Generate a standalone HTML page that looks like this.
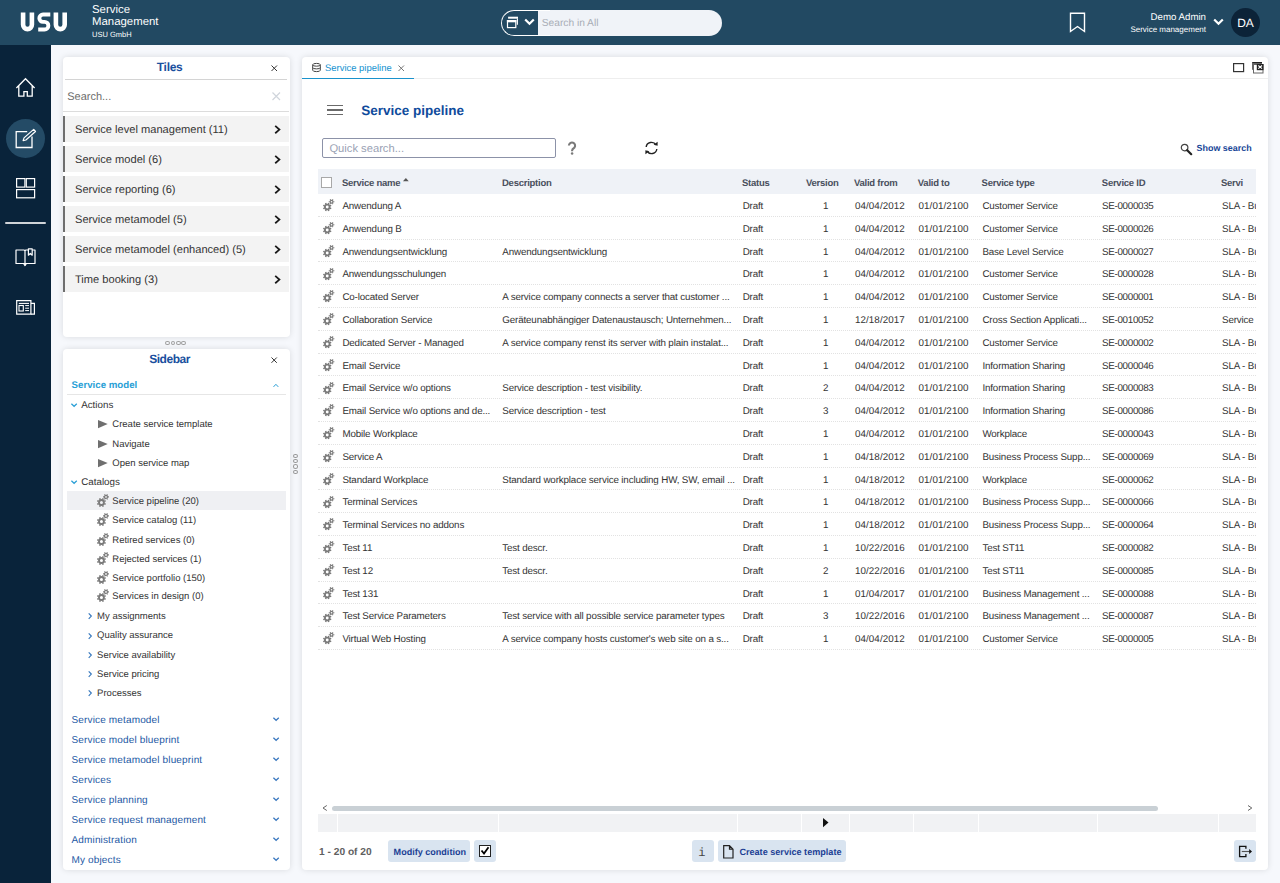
<!DOCTYPE html><html><head><meta charset="utf-8"><style>
html,body{margin:0;padding:0;}
body{text-rendering:geometricPrecision;width:1280px;height:883px;overflow:hidden;position:relative;background:#f6f8fc;font-family:"Liberation Sans",sans-serif;}
.t{position:absolute;white-space:nowrap;}
svg{overflow:visible}
</style></head><body>
<div style="position:absolute;left:0px;top:0px;width:1280px;height:45px;background:#224962;"></div>
<svg style="position:absolute;left:0px;top:0.4px;" width="80" height="45" viewBox="0 0 80 45"><g fill="none" stroke="#fff"><path d="M23.1 12.6 V24.7 A4.4 4.4 0 0 0 31.9 24.7 V12.6" stroke-width="4.6"/><path d="M50.3 14.55 H43 A3.65 3.65 0 0 0 43 21.85 H44.55 A3.825 3.825 0 0 1 44.55 29.5 H38.2" stroke-width="3.9"/><path d="M55.9 12.6 V24.7 A4.4 4.4 0 0 0 64.7 24.7 V12.6" stroke-width="4.6"/></g></svg>
<div class="t" style="left:92.00px;top:5.00px;font-size:11.4px;line-height:11.4px;color:#ffffff;font-weight:400;letter-spacing:0px;">Service</div>
<div class="t" style="left:92.00px;top:17.00px;font-size:11.4px;line-height:11.4px;color:#ffffff;font-weight:400;letter-spacing:0px;">Management</div>
<div class="t" style="left:92.00px;top:31.00px;font-size:7.5px;line-height:7.5px;color:#ffffff;font-weight:400;letter-spacing:0px;">USU GmbH</div>
<div style="position:absolute;left:501px;top:10px;width:221px;height:26px;border-radius:13px;background:#f0f3f8;overflow:hidden;"><div style="position:absolute;left:0;top:0;width:37px;height:26px;background:#224962;"></div><div style="position:absolute;left:0;top:0;width:48px;height:24px;border:1px solid #fff;border-right:none;border-radius:13px 0 0 13px;box-sizing:content-box"></div></div>
<svg style="position:absolute;left:500px;top:10px;" width="40" height="26" viewBox="0 0 40 26"><rect x="8.1" y="6.7" width="9.9" height="2" fill="#fff"/><path d="M17.4 8.5 V14.7" stroke="#fff" stroke-width="1.1" fill="none"/><rect x="7.5" y="10.6" width="8.3" height="7" fill="#224962" stroke="#fff" stroke-width="1.2"/><rect x="6.9" y="10" width="9.4" height="2.3" fill="#fff"/></svg>
<svg style="position:absolute;left:524px;top:18px;" width="11" height="8" viewBox="0 0 11 8"><path d="M1.2 1.5 L5.5 5.8 L9.8 1.5" fill="none" stroke="#fff" stroke-width="2.2"/></svg>
<div class="t" style="left:541.80px;top:19.00px;font-size:10.2px;line-height:10.2px;color:#a8adb6;font-weight:400;letter-spacing:0px;">Search in All</div>
<svg style="position:absolute;left:1069px;top:12px;" width="18" height="22" viewBox="0 0 18 22"><path d="M1.5 1.3 H15.5 V19.5 L8.5 14.5 L1.5 19.5 Z" fill="none" stroke="#fff" stroke-width="1.4" stroke-linejoin="miter"/></svg>
<div class="t" style="right:74.00px;top:13.00px;font-size:9.7px;line-height:9.7px;color:#ffffff;font-weight:400;letter-spacing:0px;">Demo Admin</div>
<div class="t" style="right:74.00px;top:26.00px;font-size:8.0px;line-height:8.0px;color:#ffffff;font-weight:400;letter-spacing:0px;">Service management</div>
<svg style="position:absolute;left:1213px;top:18px;" width="11" height="8" viewBox="0 0 11 8"><path d="M1.2 1.5 L5.5 5.8 L9.8 1.5" fill="none" stroke="#fff" stroke-width="2.2"/></svg>
<div style="position:absolute;left:1231px;top:8px;width:29px;height:29px;border-radius:50%;background:#0c2338;"></div>
<div class="t" style="left:945.50px;width:600px;text-align:center;top:17.00px;font-size:12.0px;line-height:12.0px;color:#ffffff;font-weight:400;letter-spacing:0px;">DA</div>
<div style="position:absolute;left:0px;top:45px;width:51px;height:838px;background:#09233a;"></div>
<svg style="position:absolute;left:15px;top:77px;" width="22" height="21" viewBox="0 0 22 21"><path d="M1.4 11 L10.5 1.7 L19.6 11 M3.8 8.6 V19.1 H8.9 V14.6 H12.3 V19.1 H17.2 V8.6" fill="none" stroke="#fff" stroke-width="1.3"/></svg>
<div style="position:absolute;left:6px;top:119px;width:39px;height:39px;border-radius:50%;background:#244b66;"></div>
<svg style="position:absolute;left:15px;top:129px;" width="22" height="20" viewBox="0 0 22 20"><path d="M12.2 2.7 H1.2 V18.5 H17 V7.5" fill="none" stroke="#fff" stroke-width="1.3"/><path d="M8.1 11.6 L9.04 8.89 L18.7 0.35 L20.5 2.45 L10.9 11.0 Z" fill="none" stroke="#fff" stroke-width="1.2" stroke-linejoin="round"/></svg>
<svg style="position:absolute;left:15px;top:178px;" width="21" height="21" viewBox="0 0 21 21"><rect x="1.6" y="0.6" width="8.3" height="8.5" fill="none" stroke="#fff" stroke-width="1.2"/><rect x="11.3" y="0.6" width="8.3" height="8.5" fill="none" stroke="#fff" stroke-width="1.2"/><rect x="1.6" y="11.6" width="18" height="8.2" fill="none" stroke="#fff" stroke-width="1.2"/></svg>
<div style="position:absolute;left:5px;top:222px;width:41px;height:2px;background:#d0d4d8;border-radius:1px;"></div>
<svg style="position:absolute;left:15px;top:248px;" width="21" height="20" viewBox="0 0 21 20"><g fill="none" stroke="#fff" stroke-width="1.2" stroke-linejoin="round"><path d="M10 15.5 H1 V2 H9 Q10 2 10 3 V15.5"/><path d="M10 3 Q10 2 11 2 H20 V15.5 H10"/><path d="M8.6 15.5 L10 17.6 L11.4 15.5"/><path d="M13.4 0.8 V7.2 L15.3 5.5 L17.2 7.2 V0.8 Z" fill="#09233a"/></g></svg>
<svg style="position:absolute;left:15px;top:299px;" width="21" height="17" viewBox="0 0 21 17"><g fill="none" stroke="#fff"><path d="M1.7 1.7 H15.9 V15.2 H1.7 Z" stroke-width="1.2"/><path d="M15.9 4.4 H19.4 V15.2 H15.9" stroke-width="1.2"/><path d="M3.8 4.4 H14" stroke-width="1.1"/><rect x="4" y="6.5" width="4.3" height="5.5" stroke-width="1.1"/><path d="M10.2 6.6 H14 M10.2 9.2 H14 M10.2 11.6 H14" stroke-width="1"/></g></svg>
<div style="position:absolute;left:63px;top:57px;width:227px;height:280px;background:#fff;border-radius:4px;box-shadow:0 0 6px rgba(0,0,0,0.12);"></div>
<div class="t" style="left:-130.40px;width:600px;text-align:center;top:61.00px;font-size:12.0px;line-height:12.0px;color:#1a4f9e;font-weight:700;letter-spacing:-0.3px;">Tiles</div>
<svg style="position:absolute;left:271px;top:65px;" width="6.5" height="6.5" viewBox="0 0 6.5 6.5"><path d="M0.5 0.5 L6.0 6.0 M6.0 0.5 L0.5 6.0" stroke="#333" stroke-width="1.0" fill="none"/></svg>
<div style="position:absolute;left:65px;top:79px;width:222px;height:1px;background:#d4d4d4;"></div>
<div class="t" style="left:67.20px;top:92.00px;font-size:11.0px;line-height:11.0px;color:#6e6e6e;font-weight:400;letter-spacing:0px;">Search...</div>
<svg style="position:absolute;left:271.5px;top:91.5px;" width="8.5" height="8.5" viewBox="0 0 8.5 8.5"><path d="M0.5 0.5 L8.0 8.0 M8.0 0.5 L0.5 8.0" stroke="#d0d5dc" stroke-width="1.2" fill="none"/></svg>
<div style="position:absolute;left:63px;top:111px;width:226px;height:1px;background:#dcdcdc;"></div>
<div style="position:absolute;left:63px;top:116px;width:226px;height:26px;background:#f3f3f3;"></div>
<div style="position:absolute;left:63px;top:116px;width:2px;height:26px;background:#6e6e6e;"></div>
<div class="t" style="left:75.00px;top:125.00px;font-size:11.1px;line-height:11.1px;color:#333;font-weight:400;letter-spacing:0px;">Service level management (11)</div>
<svg style="position:absolute;left:274px;top:124.5px;" width="7" height="10" viewBox="0 0 7 10"><path d="M1.2 0.9 L5.4 4.6 L1.2 8.3" fill="none" stroke="#1a1a1a" stroke-width="1.8"/></svg>
<div style="position:absolute;left:63px;top:146px;width:226px;height:26px;background:#f3f3f3;"></div>
<div style="position:absolute;left:63px;top:146px;width:2px;height:26px;background:#6e6e6e;"></div>
<div class="t" style="left:75.00px;top:155.00px;font-size:11.1px;line-height:11.1px;color:#333;font-weight:400;letter-spacing:0px;">Service model (6)</div>
<svg style="position:absolute;left:274px;top:154.5px;" width="7" height="10" viewBox="0 0 7 10"><path d="M1.2 0.9 L5.4 4.6 L1.2 8.3" fill="none" stroke="#1a1a1a" stroke-width="1.8"/></svg>
<div style="position:absolute;left:63px;top:176px;width:226px;height:26px;background:#f3f3f3;"></div>
<div style="position:absolute;left:63px;top:176px;width:2px;height:26px;background:#6e6e6e;"></div>
<div class="t" style="left:75.00px;top:185.00px;font-size:11.1px;line-height:11.1px;color:#333;font-weight:400;letter-spacing:0px;">Service reporting (6)</div>
<svg style="position:absolute;left:274px;top:184.5px;" width="7" height="10" viewBox="0 0 7 10"><path d="M1.2 0.9 L5.4 4.6 L1.2 8.3" fill="none" stroke="#1a1a1a" stroke-width="1.8"/></svg>
<div style="position:absolute;left:63px;top:206px;width:226px;height:26px;background:#f3f3f3;"></div>
<div style="position:absolute;left:63px;top:206px;width:2px;height:26px;background:#6e6e6e;"></div>
<div class="t" style="left:75.00px;top:215.00px;font-size:11.1px;line-height:11.1px;color:#333;font-weight:400;letter-spacing:0px;">Service metamodel (5)</div>
<svg style="position:absolute;left:274px;top:214.5px;" width="7" height="10" viewBox="0 0 7 10"><path d="M1.2 0.9 L5.4 4.6 L1.2 8.3" fill="none" stroke="#1a1a1a" stroke-width="1.8"/></svg>
<div style="position:absolute;left:63px;top:236px;width:226px;height:26px;background:#f3f3f3;"></div>
<div style="position:absolute;left:63px;top:236px;width:2px;height:26px;background:#6e6e6e;"></div>
<div class="t" style="left:75.00px;top:245.00px;font-size:11.1px;line-height:11.1px;color:#333;font-weight:400;letter-spacing:0px;">Service metamodel (enhanced) (5)</div>
<svg style="position:absolute;left:274px;top:244.5px;" width="7" height="10" viewBox="0 0 7 10"><path d="M1.2 0.9 L5.4 4.6 L1.2 8.3" fill="none" stroke="#1a1a1a" stroke-width="1.8"/></svg>
<div style="position:absolute;left:63px;top:266px;width:226px;height:26px;background:#f3f3f3;"></div>
<div style="position:absolute;left:63px;top:266px;width:2px;height:26px;background:#6e6e6e;"></div>
<div class="t" style="left:75.00px;top:275.00px;font-size:11.1px;line-height:11.1px;color:#333;font-weight:400;letter-spacing:0px;">Time booking (3)</div>
<svg style="position:absolute;left:274px;top:274.5px;" width="7" height="10" viewBox="0 0 7 10"><path d="M1.2 0.9 L5.4 4.6 L1.2 8.3" fill="none" stroke="#1a1a1a" stroke-width="1.8"/></svg>
<div style="position:absolute;left:165.4px;top:340.9px;width:2.6px;height:2.4px;border:0.8px solid #a0a0a0;border-radius:50%;"></div>
<div style="position:absolute;left:170.7px;top:340.9px;width:2.6px;height:2.4px;border:0.8px solid #a0a0a0;border-radius:50%;"></div>
<div style="position:absolute;left:176.0px;top:340.9px;width:2.6px;height:2.4px;border:0.8px solid #a0a0a0;border-radius:50%;"></div>
<div style="position:absolute;left:181.3px;top:340.9px;width:2.6px;height:2.4px;border:0.8px solid #a0a0a0;border-radius:50%;"></div>
<div style="position:absolute;left:293.2px;top:453.5px;width:3.2px;height:2.6px;border:0.8px solid #999;border-radius:50%;"></div>
<div style="position:absolute;left:293.2px;top:458.9px;width:3.2px;height:2.6px;border:0.8px solid #999;border-radius:50%;"></div>
<div style="position:absolute;left:293.2px;top:464.2px;width:3.2px;height:2.6px;border:0.8px solid #999;border-radius:50%;"></div>
<div style="position:absolute;left:293.2px;top:469.6px;width:3.2px;height:2.6px;border:0.8px solid #999;border-radius:50%;"></div>
<div style="position:absolute;left:63px;top:349px;width:227px;height:521px;background:#fff;border-radius:4px;box-shadow:0 0 6px rgba(0,0,0,0.12);"></div>
<div class="t" style="left:-130.40px;width:600px;text-align:center;top:353.00px;font-size:12.0px;line-height:12.0px;color:#1a4f9e;font-weight:700;letter-spacing:-0.45px;">Sidebar</div>
<svg style="position:absolute;left:270.8px;top:357px;" width="6.3" height="6.3" viewBox="0 0 6.3 6.3"><path d="M0.5 0.5 L5.8 5.8 M5.8 0.5 L0.5 5.8" stroke="#333" stroke-width="1.0" fill="none"/></svg>
<div class="t" style="left:71.60px;top:381.00px;font-size:9.7px;line-height:9.7px;color:#2a9fd6;font-weight:700;letter-spacing:0px;">Service model</div>
<svg style="position:absolute;left:273px;top:382.5px;" width="6" height="5" viewBox="0 0 6 5"><path d="M0.5 3.9 L2.9 1.3 L5.3 3.9" fill="none" stroke="#2a9fd6" stroke-width="1.0"/></svg>
<div style="position:absolute;left:67px;top:394px;width:219px;height:1px;background:#e6e6e6;"></div>
<svg style="position:absolute;left:70.5px;top:402.5px;" width="7" height="4" viewBox="0 0 7 4"><path d="M0.4 0.7 L3.1 3.3 L5.8 0.7" fill="none" stroke="#2a9fd6" stroke-width="1.2"/></svg>
<div class="t" style="left:81.20px;top:401.00px;font-size:9.8px;line-height:9.8px;color:#333;font-weight:400;letter-spacing:0px;">Actions</div>
<svg style="position:absolute;left:98.1px;top:419.9px;" width="10" height="9" viewBox="0 0 10 9"><path d="M0 0 L9.7 4.1 L0 8.2 Z" fill="#6f6f6f"/></svg>
<div class="t" style="left:112.30px;top:420.00px;font-size:9.5px;line-height:9.5px;color:#333;font-weight:400;letter-spacing:0px;">Create service template</div>
<svg style="position:absolute;left:98.1px;top:439.9px;" width="10" height="9" viewBox="0 0 10 9"><path d="M0 0 L9.7 4.1 L0 8.2 Z" fill="#6f6f6f"/></svg>
<div class="t" style="left:112.30px;top:440.00px;font-size:9.5px;line-height:9.5px;color:#333;font-weight:400;letter-spacing:0px;">Navigate</div>
<svg style="position:absolute;left:98.1px;top:458.6px;" width="10" height="9" viewBox="0 0 10 9"><path d="M0 0 L9.7 4.1 L0 8.2 Z" fill="#6f6f6f"/></svg>
<div class="t" style="left:112.30px;top:459.00px;font-size:9.5px;line-height:9.5px;color:#333;font-weight:400;letter-spacing:0px;">Open service map</div>
<svg style="position:absolute;left:70.5px;top:479.7px;" width="7" height="4" viewBox="0 0 7 4"><path d="M0.4 0.7 L3.1 3.3 L5.8 0.7" fill="none" stroke="#2a9fd6" stroke-width="1.2"/></svg>
<div class="t" style="left:81.20px;top:478.00px;font-size:9.8px;line-height:9.8px;color:#333;font-weight:400;letter-spacing:0px;">Catalogs</div>
<div style="position:absolute;left:67px;top:491px;width:219px;height:19px;background:#eff0f3;"></div>
<svg style="position:absolute;left:96.9px;top:492.9px;" width="13" height="14" viewBox="0 0 13 14"><g transform="scale(1.0)"><circle cx="4.45" cy="9.5" r="2.45" fill="none" stroke="#7b7b7b" stroke-width="1.9"/><path d="M7.22 10.65 L8.65 11.24 M5.60 12.27 L6.19 13.70 M3.30 12.27 L2.71 13.70 M1.68 10.65 L0.25 11.24 M1.68 8.35 L0.25 7.76 M3.30 6.73 L2.71 5.30 M5.60 6.73 L6.19 5.30 M7.22 8.35 L8.65 7.76 " stroke="#7b7b7b" stroke-width="1.5" fill="none"/><circle cx="9.0" cy="3.9" r="1.5" fill="none" stroke="#7b7b7b" stroke-width="1.3"/><path d="M10.90 3.90 L11.95 3.90 M9.95 5.55 L10.47 6.45 M8.05 5.55 L7.53 6.45 M7.10 3.90 L6.05 3.90 M8.05 2.25 L7.52 1.35 M9.95 2.25 L10.47 1.35 " stroke="#7b7b7b" stroke-width="1.1" fill="none"/></g></svg>
<div class="t" style="left:112.30px;top:497.00px;font-size:9.5px;line-height:9.5px;color:#333;font-weight:400;letter-spacing:0px;">Service pipeline (20)</div>
<svg style="position:absolute;left:96.9px;top:511.9px;" width="13" height="14" viewBox="0 0 13 14"><g transform="scale(1.0)"><circle cx="4.45" cy="9.5" r="2.45" fill="none" stroke="#7b7b7b" stroke-width="1.9"/><path d="M7.22 10.65 L8.65 11.24 M5.60 12.27 L6.19 13.70 M3.30 12.27 L2.71 13.70 M1.68 10.65 L0.25 11.24 M1.68 8.35 L0.25 7.76 M3.30 6.73 L2.71 5.30 M5.60 6.73 L6.19 5.30 M7.22 8.35 L8.65 7.76 " stroke="#7b7b7b" stroke-width="1.5" fill="none"/><circle cx="9.0" cy="3.9" r="1.5" fill="none" stroke="#7b7b7b" stroke-width="1.3"/><path d="M10.90 3.90 L11.95 3.90 M9.95 5.55 L10.47 6.45 M8.05 5.55 L7.53 6.45 M7.10 3.90 L6.05 3.90 M8.05 2.25 L7.52 1.35 M9.95 2.25 L10.47 1.35 " stroke="#7b7b7b" stroke-width="1.1" fill="none"/></g></svg>
<div class="t" style="left:112.30px;top:516.00px;font-size:9.5px;line-height:9.5px;color:#333;font-weight:400;letter-spacing:0px;">Service catalog (11)</div>
<svg style="position:absolute;left:96.9px;top:531.6px;" width="13" height="14" viewBox="0 0 13 14"><g transform="scale(1.0)"><circle cx="4.45" cy="9.5" r="2.45" fill="none" stroke="#7b7b7b" stroke-width="1.9"/><path d="M7.22 10.65 L8.65 11.24 M5.60 12.27 L6.19 13.70 M3.30 12.27 L2.71 13.70 M1.68 10.65 L0.25 11.24 M1.68 8.35 L0.25 7.76 M3.30 6.73 L2.71 5.30 M5.60 6.73 L6.19 5.30 M7.22 8.35 L8.65 7.76 " stroke="#7b7b7b" stroke-width="1.5" fill="none"/><circle cx="9.0" cy="3.9" r="1.5" fill="none" stroke="#7b7b7b" stroke-width="1.3"/><path d="M10.90 3.90 L11.95 3.90 M9.95 5.55 L10.47 6.45 M8.05 5.55 L7.53 6.45 M7.10 3.90 L6.05 3.90 M8.05 2.25 L7.52 1.35 M9.95 2.25 L10.47 1.35 " stroke="#7b7b7b" stroke-width="1.1" fill="none"/></g></svg>
<div class="t" style="left:112.30px;top:536.00px;font-size:9.5px;line-height:9.5px;color:#333;font-weight:400;letter-spacing:0px;">Retired services (0)</div>
<svg style="position:absolute;left:96.9px;top:550.5px;" width="13" height="14" viewBox="0 0 13 14"><g transform="scale(1.0)"><circle cx="4.45" cy="9.5" r="2.45" fill="none" stroke="#7b7b7b" stroke-width="1.9"/><path d="M7.22 10.65 L8.65 11.24 M5.60 12.27 L6.19 13.70 M3.30 12.27 L2.71 13.70 M1.68 10.65 L0.25 11.24 M1.68 8.35 L0.25 7.76 M3.30 6.73 L2.71 5.30 M5.60 6.73 L6.19 5.30 M7.22 8.35 L8.65 7.76 " stroke="#7b7b7b" stroke-width="1.5" fill="none"/><circle cx="9.0" cy="3.9" r="1.5" fill="none" stroke="#7b7b7b" stroke-width="1.3"/><path d="M10.90 3.90 L11.95 3.90 M9.95 5.55 L10.47 6.45 M8.05 5.55 L7.53 6.45 M7.10 3.90 L6.05 3.90 M8.05 2.25 L7.52 1.35 M9.95 2.25 L10.47 1.35 " stroke="#7b7b7b" stroke-width="1.1" fill="none"/></g></svg>
<div class="t" style="left:112.30px;top:555.00px;font-size:9.5px;line-height:9.5px;color:#333;font-weight:400;letter-spacing:0px;">Rejected services (1)</div>
<svg style="position:absolute;left:96.9px;top:569.7px;" width="13" height="14" viewBox="0 0 13 14"><g transform="scale(1.0)"><circle cx="4.45" cy="9.5" r="2.45" fill="none" stroke="#7b7b7b" stroke-width="1.9"/><path d="M7.22 10.65 L8.65 11.24 M5.60 12.27 L6.19 13.70 M3.30 12.27 L2.71 13.70 M1.68 10.65 L0.25 11.24 M1.68 8.35 L0.25 7.76 M3.30 6.73 L2.71 5.30 M5.60 6.73 L6.19 5.30 M7.22 8.35 L8.65 7.76 " stroke="#7b7b7b" stroke-width="1.5" fill="none"/><circle cx="9.0" cy="3.9" r="1.5" fill="none" stroke="#7b7b7b" stroke-width="1.3"/><path d="M10.90 3.90 L11.95 3.90 M9.95 5.55 L10.47 6.45 M8.05 5.55 L7.53 6.45 M7.10 3.90 L6.05 3.90 M8.05 2.25 L7.52 1.35 M9.95 2.25 L10.47 1.35 " stroke="#7b7b7b" stroke-width="1.1" fill="none"/></g></svg>
<div class="t" style="left:112.30px;top:574.00px;font-size:9.5px;line-height:9.5px;color:#333;font-weight:400;letter-spacing:0px;">Service portfolio (150)</div>
<svg style="position:absolute;left:96.9px;top:588.4px;" width="13" height="14" viewBox="0 0 13 14"><g transform="scale(1.0)"><circle cx="4.45" cy="9.5" r="2.45" fill="none" stroke="#7b7b7b" stroke-width="1.9"/><path d="M7.22 10.65 L8.65 11.24 M5.60 12.27 L6.19 13.70 M3.30 12.27 L2.71 13.70 M1.68 10.65 L0.25 11.24 M1.68 8.35 L0.25 7.76 M3.30 6.73 L2.71 5.30 M5.60 6.73 L6.19 5.30 M7.22 8.35 L8.65 7.76 " stroke="#7b7b7b" stroke-width="1.5" fill="none"/><circle cx="9.0" cy="3.9" r="1.5" fill="none" stroke="#7b7b7b" stroke-width="1.3"/><path d="M10.90 3.90 L11.95 3.90 M9.95 5.55 L10.47 6.45 M8.05 5.55 L7.53 6.45 M7.10 3.90 L6.05 3.90 M8.05 2.25 L7.52 1.35 M9.95 2.25 L10.47 1.35 " stroke="#7b7b7b" stroke-width="1.1" fill="none"/></g></svg>
<div class="t" style="left:112.30px;top:592.00px;font-size:9.5px;line-height:9.5px;color:#333;font-weight:400;letter-spacing:0px;">Services in design (0)</div>
<svg style="position:absolute;left:87.5px;top:612.6px;" width="4" height="6" viewBox="0 0 4 6"><path d="M0.7 0.4 L3.3 3.1 L0.7 5.8" fill="none" stroke="#3a7bbf" stroke-width="1.2"/></svg>
<div class="t" style="left:97.10px;top:612.00px;font-size:9.5px;line-height:9.5px;color:#333;font-weight:400;letter-spacing:0px;">My assignments</div>
<svg style="position:absolute;left:87.5px;top:632.5px;" width="4" height="6" viewBox="0 0 4 6"><path d="M0.7 0.4 L3.3 3.1 L0.7 5.8" fill="none" stroke="#3a7bbf" stroke-width="1.2"/></svg>
<div class="t" style="left:97.10px;top:631.00px;font-size:9.5px;line-height:9.5px;color:#333;font-weight:400;letter-spacing:0px;">Quality assurance</div>
<svg style="position:absolute;left:87.5px;top:651.7px;" width="4" height="6" viewBox="0 0 4 6"><path d="M0.7 0.4 L3.3 3.1 L0.7 5.8" fill="none" stroke="#3a7bbf" stroke-width="1.2"/></svg>
<div class="t" style="left:97.10px;top:651.00px;font-size:9.5px;line-height:9.5px;color:#333;font-weight:400;letter-spacing:0px;">Service availability</div>
<svg style="position:absolute;left:87.5px;top:670.9px;" width="4" height="6" viewBox="0 0 4 6"><path d="M0.7 0.4 L3.3 3.1 L0.7 5.8" fill="none" stroke="#3a7bbf" stroke-width="1.2"/></svg>
<div class="t" style="left:97.10px;top:670.00px;font-size:9.5px;line-height:9.5px;color:#333;font-weight:400;letter-spacing:0px;">Service pricing</div>
<svg style="position:absolute;left:87.5px;top:689.5px;" width="4" height="6" viewBox="0 0 4 6"><path d="M0.7 0.4 L3.3 3.1 L0.7 5.8" fill="none" stroke="#3a7bbf" stroke-width="1.2"/></svg>
<div class="t" style="left:97.10px;top:689.00px;font-size:9.5px;line-height:9.5px;color:#333;font-weight:400;letter-spacing:0px;">Processes</div>
<div class="t" style="left:71.50px;top:716.00px;font-size:10.0px;line-height:10.0px;color:#2358a4;font-weight:400;letter-spacing:0.15px;">Service metamodel</div>
<svg style="position:absolute;left:272.8px;top:717.3px;" width="7" height="4" viewBox="0 0 7 4"><path d="M0.4 0.7 L3.1 3.3 L5.8 0.7" fill="none" stroke="#3a78bf" stroke-width="1.2"/></svg>
<div class="t" style="left:71.50px;top:736.00px;font-size:10.0px;line-height:10.0px;color:#2358a4;font-weight:400;letter-spacing:0.15px;">Service model blueprint</div>
<svg style="position:absolute;left:272.8px;top:737.1px;" width="7" height="4" viewBox="0 0 7 4"><path d="M0.4 0.7 L3.1 3.3 L5.8 0.7" fill="none" stroke="#3a78bf" stroke-width="1.2"/></svg>
<div class="t" style="left:71.50px;top:756.00px;font-size:10.0px;line-height:10.0px;color:#2358a4;font-weight:400;letter-spacing:0.15px;">Service metamodel blueprint</div>
<svg style="position:absolute;left:272.8px;top:757.3px;" width="7" height="4" viewBox="0 0 7 4"><path d="M0.4 0.7 L3.1 3.3 L5.8 0.7" fill="none" stroke="#3a78bf" stroke-width="1.2"/></svg>
<div class="t" style="left:71.50px;top:776.00px;font-size:10.0px;line-height:10.0px;color:#2358a4;font-weight:400;letter-spacing:0.15px;">Services</div>
<svg style="position:absolute;left:272.8px;top:777.2px;" width="7" height="4" viewBox="0 0 7 4"><path d="M0.4 0.7 L3.1 3.3 L5.8 0.7" fill="none" stroke="#3a78bf" stroke-width="1.2"/></svg>
<div class="t" style="left:71.50px;top:796.00px;font-size:10.0px;line-height:10.0px;color:#2358a4;font-weight:400;letter-spacing:0.15px;">Service planning</div>
<svg style="position:absolute;left:272.8px;top:797.1px;" width="7" height="4" viewBox="0 0 7 4"><path d="M0.4 0.7 L3.1 3.3 L5.8 0.7" fill="none" stroke="#3a78bf" stroke-width="1.2"/></svg>
<div class="t" style="left:71.50px;top:816.00px;font-size:10.0px;line-height:10.0px;color:#2358a4;font-weight:400;letter-spacing:0.15px;">Service request management</div>
<svg style="position:absolute;left:272.8px;top:817.3px;" width="7" height="4" viewBox="0 0 7 4"><path d="M0.4 0.7 L3.1 3.3 L5.8 0.7" fill="none" stroke="#3a78bf" stroke-width="1.2"/></svg>
<div class="t" style="left:71.50px;top:836.00px;font-size:10.0px;line-height:10.0px;color:#2358a4;font-weight:400;letter-spacing:0.15px;">Administration</div>
<svg style="position:absolute;left:272.8px;top:837.1px;" width="7" height="4" viewBox="0 0 7 4"><path d="M0.4 0.7 L3.1 3.3 L5.8 0.7" fill="none" stroke="#3a78bf" stroke-width="1.2"/></svg>
<div class="t" style="left:71.50px;top:856.00px;font-size:10.0px;line-height:10.0px;color:#2358a4;font-weight:400;letter-spacing:0.15px;">My objects</div>
<svg style="position:absolute;left:272.8px;top:857.3px;" width="7" height="4" viewBox="0 0 7 4"><path d="M0.4 0.7 L3.1 3.3 L5.8 0.7" fill="none" stroke="#3a78bf" stroke-width="1.2"/></svg>
<div style="position:absolute;left:302px;top:57px;width:966px;height:813px;background:#fff;border-radius:4px;box-shadow:0 0 6px rgba(0,0,0,0.12);"></div>
<svg style="position:absolute;left:312px;top:63px;" width="9" height="9" viewBox="0 0 9 9"><ellipse cx="4.5" cy="1.8" rx="3.8" ry="1.4" fill="none" stroke="#444" stroke-width="1"/><path d="M0.7 1.8 V7.2 A3.8 1.4 0 0 0 8.3 7.2 V1.8 M0.7 4.5 A3.8 1.4 0 0 0 8.3 4.5" fill="none" stroke="#444" stroke-width="1"/></svg>
<div class="t" style="left:325.00px;top:64.00px;font-size:9.45px;line-height:9.45px;color:#1592d0;font-weight:400;letter-spacing:0px;">Service pipeline</div>
<svg style="position:absolute;left:397.5px;top:64.5px;" width="6.5" height="6.5" viewBox="0 0 6.5 6.5"><path d="M0.5 0.5 L6.0 6.0 M6.0 0.5 L0.5 6.0" stroke="#666" stroke-width="0.9" fill="none"/></svg>
<div style="position:absolute;left:414px;top:78px;width:854px;height:1px;background:#eeeeee;"></div>
<div style="position:absolute;left:302px;top:77.6px;width:112px;height:1.6000000000000085px;background:#1a92cc;"></div>
<svg style="position:absolute;left:1233px;top:63px;" width="11" height="9" viewBox="0 0 11 9"><rect x="0.6" y="0.6" width="10" height="8" fill="none" stroke="#333" stroke-width="1.2"/></svg>
<svg style="position:absolute;left:1252px;top:62px;" width="12" height="12" viewBox="0 0 12 12"><rect x="0" y="0" width="10" height="1.7" fill="#222"/><path d="M0.5 0.5 V7.8" stroke="#666" stroke-width="1" fill="none"/><circle cx="2.9" cy="4.3" r="0.9" fill="#222"/><rect x="1.5" y="2.5" width="9.5" height="8.5" fill="#fff" stroke="#666" stroke-width="1"/><rect x="4.8" y="2" width="6.7" height="6.2" fill="#222"/><path d="M6.3 3.5 L10 6.7 M10 3.5 L6.3 6.7" stroke="#fff" stroke-width="1.1"/></svg>
<div style="position:absolute;left:327px;top:104.5px;width:16px;height:1.7999999999999972px;background:#6a6a6a;"></div>
<div style="position:absolute;left:327px;top:109.1px;width:16px;height:1.7999999999999972px;background:#6a6a6a;"></div>
<div style="position:absolute;left:327px;top:113.6px;width:16px;height:1.7999999999999972px;background:#6a6a6a;"></div>
<div class="t" style="left:361.30px;top:104.00px;font-size:13.5px;line-height:13.5px;color:#0f4b9c;font-weight:700;letter-spacing:0px;">Service pipeline</div>
<div style="position:absolute;left:322px;top:138px;width:232px;height:18px;border:1px solid #8c92a8;border-radius:2px;background:#fff"></div>
<div class="t" style="left:329.40px;top:144.00px;font-size:11.2px;line-height:11.2px;color:#9aa2b4;font-weight:400;letter-spacing:0px;">Quick search...</div>
<svg style="position:absolute;left:566px;top:141px;" width="12" height="14" viewBox="0 0 12 14"><path d="M2.9 4.6 A3.1 3.1 0 1 1 8.4 6.6 Q6.1 8.1 6.1 9.6 V10.3" fill="none" stroke="#7a7a7a" stroke-width="2.1"/><circle cx="6.1" cy="12.4" r="1.25" fill="#7a7a7a"/></svg>
<svg style="position:absolute;left:644px;top:141px;" width="15" height="14" viewBox="0 0 15 14"><path d="M2.2 6 A5.3 5 0 0 1 12 3.8" fill="none" stroke="#222" stroke-width="1.4"/><path d="M12.8 8 A5.3 5 0 0 1 3 10.2" fill="none" stroke="#222" stroke-width="1.4"/><path d="M9.6 3.8 L13.6 4.8 L13.6 0.8 Z" fill="#222"/><path d="M5.4 10.2 L1.4 9.2 L1.4 13.2 Z" fill="#222"/></svg>
<svg style="position:absolute;left:1180px;top:142.5px;" width="13" height="13" viewBox="0 0 13 13"><circle cx="4.6" cy="4.6" r="3.3" fill="none" stroke="#444" stroke-width="1.2"/><path d="M7.2 7.2 L11.2 11.2" stroke="#222" stroke-width="2.2" stroke-linecap="round"/></svg>
<div class="t" style="left:1196.50px;top:144.00px;font-size:8.95px;line-height:8.95px;color:#174597;font-weight:700;letter-spacing:0px;">Show search</div>
<div style="position:absolute;left:318px;top:169px;width:938px;height:25px;background:#eff2f7;"></div>
<div style="position:absolute;left:321px;top:177px;width:9px;height:9px;border:1px solid #a8a8a8;background:#fff"></div>
<div class="t" style="left:342.00px;top:179.00px;font-size:9.5px;line-height:9.5px;color:#4a505e;font-weight:700;letter-spacing:-0.25px;">Service name</div>
<svg style="position:absolute;left:403px;top:177.8px;" width="6" height="4" viewBox="0 0 6 4"><path d="M0 3.2 L2.85 0 L5.7 3.2 Z" fill="#555"/></svg>
<div class="t" style="left:502.00px;top:179.00px;font-size:9.5px;line-height:9.5px;color:#4a505e;font-weight:700;letter-spacing:-0.25px;">Description</div>
<div class="t" style="left:742.00px;top:179.00px;font-size:9.5px;line-height:9.5px;color:#4a505e;font-weight:700;letter-spacing:-0.25px;">Status</div>
<div class="t" style="left:806.00px;top:179.00px;font-size:9.5px;line-height:9.5px;color:#4a505e;font-weight:700;letter-spacing:-0.25px;">Version</div>
<div class="t" style="left:854.00px;top:179.00px;font-size:9.5px;line-height:9.5px;color:#4a505e;font-weight:700;letter-spacing:-0.25px;">Valid from</div>
<div class="t" style="left:917.80px;top:179.00px;font-size:9.5px;line-height:9.5px;color:#4a505e;font-weight:700;letter-spacing:-0.25px;">Valid to</div>
<div class="t" style="left:981.60px;top:179.00px;font-size:9.5px;line-height:9.5px;color:#4a505e;font-weight:700;letter-spacing:-0.25px;">Service type</div>
<div class="t" style="left:1101.80px;top:179.00px;font-size:9.5px;line-height:9.5px;color:#4a505e;font-weight:700;letter-spacing:-0.25px;">Service ID</div>
<div class="t" style="left:1221.00px;top:179.00px;font-size:9.5px;line-height:9.5px;color:#4a505e;font-weight:700;letter-spacing:-0.25px;">Servi</div>
<div style="position:absolute;left:318px;top:215.80px;width:938px;height:0;border-top:1px dotted #e2e2e2"></div>
<svg style="position:absolute;left:322.97px;top:198.27px;" width="13" height="14" viewBox="0 0 13 14"><g transform="scale(0.95)"><circle cx="4.45" cy="9.5" r="2.45" fill="none" stroke="#7b7b7b" stroke-width="1.9"/><path d="M7.22 10.65 L8.65 11.24 M5.60 12.27 L6.19 13.70 M3.30 12.27 L2.71 13.70 M1.68 10.65 L0.25 11.24 M1.68 8.35 L0.25 7.76 M3.30 6.73 L2.71 5.30 M5.60 6.73 L6.19 5.30 M7.22 8.35 L8.65 7.76 " stroke="#7b7b7b" stroke-width="1.5" fill="none"/><circle cx="9.0" cy="3.9" r="1.5" fill="none" stroke="#7b7b7b" stroke-width="1.3"/><path d="M10.90 3.90 L11.95 3.90 M9.95 5.55 L10.47 6.45 M8.05 5.55 L7.53 6.45 M7.10 3.90 L6.05 3.90 M8.05 2.25 L7.52 1.35 M9.95 2.25 L10.47 1.35 " stroke="#7b7b7b" stroke-width="1.1" fill="none"/></g></svg>
<div class="t" style="left:342.40px;top:202.00px;font-size:9.8px;line-height:9.8px;color:#333;font-weight:400;letter-spacing:-0.15px;">Anwendung A</div>
<div class="t" style="left:742.70px;top:202.00px;font-size:9.8px;line-height:9.8px;color:#333;font-weight:400;letter-spacing:-0.15px;">Draft</div>
<div class="t" style="left:525.80px;width:600px;text-align:center;top:202.00px;font-size:9.8px;line-height:9.8px;color:#333;font-weight:400;letter-spacing:0px;">1</div>
<div class="t" style="left:854.90px;top:202.00px;font-size:9.8px;line-height:9.8px;color:#333;font-weight:400;letter-spacing:0.1px;">04/04/2012</div>
<div class="t" style="left:918.50px;top:202.00px;font-size:9.8px;line-height:9.8px;color:#333;font-weight:400;letter-spacing:0.1px;">01/01/2100</div>
<div class="t" style="left:982.40px;top:202.00px;font-size:9.8px;line-height:9.8px;color:#333;font-weight:400;letter-spacing:-0.15px;">Customer Service</div>
<div class="t" style="left:1102.00px;top:202.00px;font-size:9.8px;line-height:9.8px;color:#333;font-weight:400;letter-spacing:-0.3px;">SE-0000035</div>
<div class="t" style="left:1222.00px;top:202.00px;font-size:9.8px;line-height:9.8px;color:#333;font-weight:400;letter-spacing:-0.15px;width:34px;overflow:hidden;">SLA - Bu</div>
<div style="position:absolute;left:318px;top:238.60px;width:938px;height:0;border-top:1px dotted #e2e2e2"></div>
<svg style="position:absolute;left:322.97px;top:221.07000000000002px;" width="13" height="14" viewBox="0 0 13 14"><g transform="scale(0.95)"><circle cx="4.45" cy="9.5" r="2.45" fill="none" stroke="#7b7b7b" stroke-width="1.9"/><path d="M7.22 10.65 L8.65 11.24 M5.60 12.27 L6.19 13.70 M3.30 12.27 L2.71 13.70 M1.68 10.65 L0.25 11.24 M1.68 8.35 L0.25 7.76 M3.30 6.73 L2.71 5.30 M5.60 6.73 L6.19 5.30 M7.22 8.35 L8.65 7.76 " stroke="#7b7b7b" stroke-width="1.5" fill="none"/><circle cx="9.0" cy="3.9" r="1.5" fill="none" stroke="#7b7b7b" stroke-width="1.3"/><path d="M10.90 3.90 L11.95 3.90 M9.95 5.55 L10.47 6.45 M8.05 5.55 L7.53 6.45 M7.10 3.90 L6.05 3.90 M8.05 2.25 L7.52 1.35 M9.95 2.25 L10.47 1.35 " stroke="#7b7b7b" stroke-width="1.1" fill="none"/></g></svg>
<div class="t" style="left:342.40px;top:225.00px;font-size:9.8px;line-height:9.8px;color:#333;font-weight:400;letter-spacing:-0.15px;">Anwendung B</div>
<div class="t" style="left:742.70px;top:225.00px;font-size:9.8px;line-height:9.8px;color:#333;font-weight:400;letter-spacing:-0.15px;">Draft</div>
<div class="t" style="left:525.80px;width:600px;text-align:center;top:225.00px;font-size:9.8px;line-height:9.8px;color:#333;font-weight:400;letter-spacing:0px;">1</div>
<div class="t" style="left:854.90px;top:225.00px;font-size:9.8px;line-height:9.8px;color:#333;font-weight:400;letter-spacing:0.1px;">04/04/2012</div>
<div class="t" style="left:918.50px;top:225.00px;font-size:9.8px;line-height:9.8px;color:#333;font-weight:400;letter-spacing:0.1px;">01/01/2100</div>
<div class="t" style="left:982.40px;top:225.00px;font-size:9.8px;line-height:9.8px;color:#333;font-weight:400;letter-spacing:-0.15px;">Customer Service</div>
<div class="t" style="left:1102.00px;top:225.00px;font-size:9.8px;line-height:9.8px;color:#333;font-weight:400;letter-spacing:-0.3px;">SE-0000026</div>
<div class="t" style="left:1222.00px;top:225.00px;font-size:9.8px;line-height:9.8px;color:#333;font-weight:400;letter-spacing:-0.15px;width:34px;overflow:hidden;">SLA - Bu</div>
<div style="position:absolute;left:318px;top:261.40px;width:938px;height:0;border-top:1px dotted #e2e2e2"></div>
<svg style="position:absolute;left:322.97px;top:243.87px;" width="13" height="14" viewBox="0 0 13 14"><g transform="scale(0.95)"><circle cx="4.45" cy="9.5" r="2.45" fill="none" stroke="#7b7b7b" stroke-width="1.9"/><path d="M7.22 10.65 L8.65 11.24 M5.60 12.27 L6.19 13.70 M3.30 12.27 L2.71 13.70 M1.68 10.65 L0.25 11.24 M1.68 8.35 L0.25 7.76 M3.30 6.73 L2.71 5.30 M5.60 6.73 L6.19 5.30 M7.22 8.35 L8.65 7.76 " stroke="#7b7b7b" stroke-width="1.5" fill="none"/><circle cx="9.0" cy="3.9" r="1.5" fill="none" stroke="#7b7b7b" stroke-width="1.3"/><path d="M10.90 3.90 L11.95 3.90 M9.95 5.55 L10.47 6.45 M8.05 5.55 L7.53 6.45 M7.10 3.90 L6.05 3.90 M8.05 2.25 L7.52 1.35 M9.95 2.25 L10.47 1.35 " stroke="#7b7b7b" stroke-width="1.1" fill="none"/></g></svg>
<div class="t" style="left:342.40px;top:248.00px;font-size:9.8px;line-height:9.8px;color:#333;font-weight:400;letter-spacing:-0.15px;">Anwendungsentwicklung</div>
<div class="t" style="left:502.30px;top:248.00px;font-size:9.8px;line-height:9.8px;color:#333;font-weight:400;letter-spacing:-0.15px;">Anwendungsentwicklung</div>
<div class="t" style="left:742.70px;top:248.00px;font-size:9.8px;line-height:9.8px;color:#333;font-weight:400;letter-spacing:-0.15px;">Draft</div>
<div class="t" style="left:525.80px;width:600px;text-align:center;top:248.00px;font-size:9.8px;line-height:9.8px;color:#333;font-weight:400;letter-spacing:0px;">1</div>
<div class="t" style="left:854.90px;top:248.00px;font-size:9.8px;line-height:9.8px;color:#333;font-weight:400;letter-spacing:0.1px;">04/04/2012</div>
<div class="t" style="left:918.50px;top:248.00px;font-size:9.8px;line-height:9.8px;color:#333;font-weight:400;letter-spacing:0.1px;">01/01/2100</div>
<div class="t" style="left:982.40px;top:248.00px;font-size:9.8px;line-height:9.8px;color:#333;font-weight:400;letter-spacing:-0.15px;">Base Level Service</div>
<div class="t" style="left:1102.00px;top:248.00px;font-size:9.8px;line-height:9.8px;color:#333;font-weight:400;letter-spacing:-0.3px;">SE-0000027</div>
<div class="t" style="left:1222.00px;top:248.00px;font-size:9.8px;line-height:9.8px;color:#333;font-weight:400;letter-spacing:-0.15px;width:34px;overflow:hidden;">SLA - Bu</div>
<div style="position:absolute;left:318px;top:284.20px;width:938px;height:0;border-top:1px dotted #e2e2e2"></div>
<svg style="position:absolute;left:322.97px;top:266.66999999999996px;" width="13" height="14" viewBox="0 0 13 14"><g transform="scale(0.95)"><circle cx="4.45" cy="9.5" r="2.45" fill="none" stroke="#7b7b7b" stroke-width="1.9"/><path d="M7.22 10.65 L8.65 11.24 M5.60 12.27 L6.19 13.70 M3.30 12.27 L2.71 13.70 M1.68 10.65 L0.25 11.24 M1.68 8.35 L0.25 7.76 M3.30 6.73 L2.71 5.30 M5.60 6.73 L6.19 5.30 M7.22 8.35 L8.65 7.76 " stroke="#7b7b7b" stroke-width="1.5" fill="none"/><circle cx="9.0" cy="3.9" r="1.5" fill="none" stroke="#7b7b7b" stroke-width="1.3"/><path d="M10.90 3.90 L11.95 3.90 M9.95 5.55 L10.47 6.45 M8.05 5.55 L7.53 6.45 M7.10 3.90 L6.05 3.90 M8.05 2.25 L7.52 1.35 M9.95 2.25 L10.47 1.35 " stroke="#7b7b7b" stroke-width="1.1" fill="none"/></g></svg>
<div class="t" style="left:342.40px;top:270.00px;font-size:9.8px;line-height:9.8px;color:#333;font-weight:400;letter-spacing:-0.15px;">Anwendungsschulungen</div>
<div class="t" style="left:742.70px;top:270.00px;font-size:9.8px;line-height:9.8px;color:#333;font-weight:400;letter-spacing:-0.15px;">Draft</div>
<div class="t" style="left:525.80px;width:600px;text-align:center;top:270.00px;font-size:9.8px;line-height:9.8px;color:#333;font-weight:400;letter-spacing:0px;">1</div>
<div class="t" style="left:854.90px;top:270.00px;font-size:9.8px;line-height:9.8px;color:#333;font-weight:400;letter-spacing:0.1px;">04/04/2012</div>
<div class="t" style="left:918.50px;top:270.00px;font-size:9.8px;line-height:9.8px;color:#333;font-weight:400;letter-spacing:0.1px;">01/01/2100</div>
<div class="t" style="left:982.40px;top:270.00px;font-size:9.8px;line-height:9.8px;color:#333;font-weight:400;letter-spacing:-0.15px;">Customer Service</div>
<div class="t" style="left:1102.00px;top:270.00px;font-size:9.8px;line-height:9.8px;color:#333;font-weight:400;letter-spacing:-0.3px;">SE-0000028</div>
<div class="t" style="left:1222.00px;top:270.00px;font-size:9.8px;line-height:9.8px;color:#333;font-weight:400;letter-spacing:-0.15px;width:34px;overflow:hidden;">SLA - Bu</div>
<div style="position:absolute;left:318px;top:307.00px;width:938px;height:0;border-top:1px dotted #e2e2e2"></div>
<svg style="position:absolute;left:322.97px;top:289.46999999999997px;" width="13" height="14" viewBox="0 0 13 14"><g transform="scale(0.95)"><circle cx="4.45" cy="9.5" r="2.45" fill="none" stroke="#7b7b7b" stroke-width="1.9"/><path d="M7.22 10.65 L8.65 11.24 M5.60 12.27 L6.19 13.70 M3.30 12.27 L2.71 13.70 M1.68 10.65 L0.25 11.24 M1.68 8.35 L0.25 7.76 M3.30 6.73 L2.71 5.30 M5.60 6.73 L6.19 5.30 M7.22 8.35 L8.65 7.76 " stroke="#7b7b7b" stroke-width="1.5" fill="none"/><circle cx="9.0" cy="3.9" r="1.5" fill="none" stroke="#7b7b7b" stroke-width="1.3"/><path d="M10.90 3.90 L11.95 3.90 M9.95 5.55 L10.47 6.45 M8.05 5.55 L7.53 6.45 M7.10 3.90 L6.05 3.90 M8.05 2.25 L7.52 1.35 M9.95 2.25 L10.47 1.35 " stroke="#7b7b7b" stroke-width="1.1" fill="none"/></g></svg>
<div class="t" style="left:342.40px;top:293.00px;font-size:9.8px;line-height:9.8px;color:#333;font-weight:400;letter-spacing:-0.15px;">Co-located Server</div>
<div class="t" style="left:502.30px;top:293.00px;font-size:9.8px;line-height:9.8px;color:#333;font-weight:400;letter-spacing:-0.15px;">A service company connects a server that customer ...</div>
<div class="t" style="left:742.70px;top:293.00px;font-size:9.8px;line-height:9.8px;color:#333;font-weight:400;letter-spacing:-0.15px;">Draft</div>
<div class="t" style="left:525.80px;width:600px;text-align:center;top:293.00px;font-size:9.8px;line-height:9.8px;color:#333;font-weight:400;letter-spacing:0px;">1</div>
<div class="t" style="left:854.90px;top:293.00px;font-size:9.8px;line-height:9.8px;color:#333;font-weight:400;letter-spacing:0.1px;">04/04/2012</div>
<div class="t" style="left:918.50px;top:293.00px;font-size:9.8px;line-height:9.8px;color:#333;font-weight:400;letter-spacing:0.1px;">01/01/2100</div>
<div class="t" style="left:982.40px;top:293.00px;font-size:9.8px;line-height:9.8px;color:#333;font-weight:400;letter-spacing:-0.15px;">Customer Service</div>
<div class="t" style="left:1102.00px;top:293.00px;font-size:9.8px;line-height:9.8px;color:#333;font-weight:400;letter-spacing:-0.3px;">SE-0000001</div>
<div class="t" style="left:1222.00px;top:293.00px;font-size:9.8px;line-height:9.8px;color:#333;font-weight:400;letter-spacing:-0.15px;width:34px;overflow:hidden;">SLA - Bu</div>
<div style="position:absolute;left:318px;top:329.80px;width:938px;height:0;border-top:1px dotted #e2e2e2"></div>
<svg style="position:absolute;left:322.97px;top:312.27px;" width="13" height="14" viewBox="0 0 13 14"><g transform="scale(0.95)"><circle cx="4.45" cy="9.5" r="2.45" fill="none" stroke="#7b7b7b" stroke-width="1.9"/><path d="M7.22 10.65 L8.65 11.24 M5.60 12.27 L6.19 13.70 M3.30 12.27 L2.71 13.70 M1.68 10.65 L0.25 11.24 M1.68 8.35 L0.25 7.76 M3.30 6.73 L2.71 5.30 M5.60 6.73 L6.19 5.30 M7.22 8.35 L8.65 7.76 " stroke="#7b7b7b" stroke-width="1.5" fill="none"/><circle cx="9.0" cy="3.9" r="1.5" fill="none" stroke="#7b7b7b" stroke-width="1.3"/><path d="M10.90 3.90 L11.95 3.90 M9.95 5.55 L10.47 6.45 M8.05 5.55 L7.53 6.45 M7.10 3.90 L6.05 3.90 M8.05 2.25 L7.52 1.35 M9.95 2.25 L10.47 1.35 " stroke="#7b7b7b" stroke-width="1.1" fill="none"/></g></svg>
<div class="t" style="left:342.40px;top:316.00px;font-size:9.8px;line-height:9.8px;color:#333;font-weight:400;letter-spacing:-0.15px;">Collaboration Service</div>
<div class="t" style="left:502.30px;top:316.00px;font-size:9.8px;line-height:9.8px;color:#333;font-weight:400;letter-spacing:-0.15px;">Geräteunabhängiger Datenaustausch; Unternehmen...</div>
<div class="t" style="left:742.70px;top:316.00px;font-size:9.8px;line-height:9.8px;color:#333;font-weight:400;letter-spacing:-0.15px;">Draft</div>
<div class="t" style="left:525.80px;width:600px;text-align:center;top:316.00px;font-size:9.8px;line-height:9.8px;color:#333;font-weight:400;letter-spacing:0px;">1</div>
<div class="t" style="left:854.90px;top:316.00px;font-size:9.8px;line-height:9.8px;color:#333;font-weight:400;letter-spacing:0.1px;">12/18/2017</div>
<div class="t" style="left:918.50px;top:316.00px;font-size:9.8px;line-height:9.8px;color:#333;font-weight:400;letter-spacing:0.1px;">01/01/2100</div>
<div class="t" style="left:982.40px;top:316.00px;font-size:9.8px;line-height:9.8px;color:#333;font-weight:400;letter-spacing:-0.15px;">Cross Section Applicati...</div>
<div class="t" style="left:1102.00px;top:316.00px;font-size:9.8px;line-height:9.8px;color:#333;font-weight:400;letter-spacing:-0.3px;">SE-0010052</div>
<div class="t" style="left:1222.00px;top:316.00px;font-size:9.8px;line-height:9.8px;color:#333;font-weight:400;letter-spacing:-0.15px;width:34px;overflow:hidden;">Service</div>
<div style="position:absolute;left:318px;top:352.60px;width:938px;height:0;border-top:1px dotted #e2e2e2"></div>
<svg style="position:absolute;left:322.97px;top:335.07px;" width="13" height="14" viewBox="0 0 13 14"><g transform="scale(0.95)"><circle cx="4.45" cy="9.5" r="2.45" fill="none" stroke="#7b7b7b" stroke-width="1.9"/><path d="M7.22 10.65 L8.65 11.24 M5.60 12.27 L6.19 13.70 M3.30 12.27 L2.71 13.70 M1.68 10.65 L0.25 11.24 M1.68 8.35 L0.25 7.76 M3.30 6.73 L2.71 5.30 M5.60 6.73 L6.19 5.30 M7.22 8.35 L8.65 7.76 " stroke="#7b7b7b" stroke-width="1.5" fill="none"/><circle cx="9.0" cy="3.9" r="1.5" fill="none" stroke="#7b7b7b" stroke-width="1.3"/><path d="M10.90 3.90 L11.95 3.90 M9.95 5.55 L10.47 6.45 M8.05 5.55 L7.53 6.45 M7.10 3.90 L6.05 3.90 M8.05 2.25 L7.52 1.35 M9.95 2.25 L10.47 1.35 " stroke="#7b7b7b" stroke-width="1.1" fill="none"/></g></svg>
<div class="t" style="left:342.40px;top:339.00px;font-size:9.8px;line-height:9.8px;color:#333;font-weight:400;letter-spacing:-0.15px;">Dedicated Server - Managed</div>
<div class="t" style="left:502.30px;top:339.00px;font-size:9.8px;line-height:9.8px;color:#333;font-weight:400;letter-spacing:-0.15px;">A service company renst its server with plain instalat...</div>
<div class="t" style="left:742.70px;top:339.00px;font-size:9.8px;line-height:9.8px;color:#333;font-weight:400;letter-spacing:-0.15px;">Draft</div>
<div class="t" style="left:525.80px;width:600px;text-align:center;top:339.00px;font-size:9.8px;line-height:9.8px;color:#333;font-weight:400;letter-spacing:0px;">1</div>
<div class="t" style="left:854.90px;top:339.00px;font-size:9.8px;line-height:9.8px;color:#333;font-weight:400;letter-spacing:0.1px;">04/04/2012</div>
<div class="t" style="left:918.50px;top:339.00px;font-size:9.8px;line-height:9.8px;color:#333;font-weight:400;letter-spacing:0.1px;">01/01/2100</div>
<div class="t" style="left:982.40px;top:339.00px;font-size:9.8px;line-height:9.8px;color:#333;font-weight:400;letter-spacing:-0.15px;">Customer Service</div>
<div class="t" style="left:1102.00px;top:339.00px;font-size:9.8px;line-height:9.8px;color:#333;font-weight:400;letter-spacing:-0.3px;">SE-0000002</div>
<div class="t" style="left:1222.00px;top:339.00px;font-size:9.8px;line-height:9.8px;color:#333;font-weight:400;letter-spacing:-0.15px;width:34px;overflow:hidden;">SLA - Bu</div>
<div style="position:absolute;left:318px;top:375.40px;width:938px;height:0;border-top:1px dotted #e2e2e2"></div>
<svg style="position:absolute;left:322.97px;top:357.87px;" width="13" height="14" viewBox="0 0 13 14"><g transform="scale(0.95)"><circle cx="4.45" cy="9.5" r="2.45" fill="none" stroke="#7b7b7b" stroke-width="1.9"/><path d="M7.22 10.65 L8.65 11.24 M5.60 12.27 L6.19 13.70 M3.30 12.27 L2.71 13.70 M1.68 10.65 L0.25 11.24 M1.68 8.35 L0.25 7.76 M3.30 6.73 L2.71 5.30 M5.60 6.73 L6.19 5.30 M7.22 8.35 L8.65 7.76 " stroke="#7b7b7b" stroke-width="1.5" fill="none"/><circle cx="9.0" cy="3.9" r="1.5" fill="none" stroke="#7b7b7b" stroke-width="1.3"/><path d="M10.90 3.90 L11.95 3.90 M9.95 5.55 L10.47 6.45 M8.05 5.55 L7.53 6.45 M7.10 3.90 L6.05 3.90 M8.05 2.25 L7.52 1.35 M9.95 2.25 L10.47 1.35 " stroke="#7b7b7b" stroke-width="1.1" fill="none"/></g></svg>
<div class="t" style="left:342.40px;top:362.00px;font-size:9.8px;line-height:9.8px;color:#333;font-weight:400;letter-spacing:-0.15px;">Email Service</div>
<div class="t" style="left:742.70px;top:362.00px;font-size:9.8px;line-height:9.8px;color:#333;font-weight:400;letter-spacing:-0.15px;">Draft</div>
<div class="t" style="left:525.80px;width:600px;text-align:center;top:362.00px;font-size:9.8px;line-height:9.8px;color:#333;font-weight:400;letter-spacing:0px;">1</div>
<div class="t" style="left:854.90px;top:362.00px;font-size:9.8px;line-height:9.8px;color:#333;font-weight:400;letter-spacing:0.1px;">04/04/2012</div>
<div class="t" style="left:918.50px;top:362.00px;font-size:9.8px;line-height:9.8px;color:#333;font-weight:400;letter-spacing:0.1px;">01/01/2100</div>
<div class="t" style="left:982.40px;top:362.00px;font-size:9.8px;line-height:9.8px;color:#333;font-weight:400;letter-spacing:-0.15px;">Information Sharing</div>
<div class="t" style="left:1102.00px;top:362.00px;font-size:9.8px;line-height:9.8px;color:#333;font-weight:400;letter-spacing:-0.3px;">SE-0000046</div>
<div class="t" style="left:1222.00px;top:362.00px;font-size:9.8px;line-height:9.8px;color:#333;font-weight:400;letter-spacing:-0.15px;width:34px;overflow:hidden;">SLA - Bu</div>
<div style="position:absolute;left:318px;top:398.20px;width:938px;height:0;border-top:1px dotted #e2e2e2"></div>
<svg style="position:absolute;left:322.97px;top:380.66999999999996px;" width="13" height="14" viewBox="0 0 13 14"><g transform="scale(0.95)"><circle cx="4.45" cy="9.5" r="2.45" fill="none" stroke="#7b7b7b" stroke-width="1.9"/><path d="M7.22 10.65 L8.65 11.24 M5.60 12.27 L6.19 13.70 M3.30 12.27 L2.71 13.70 M1.68 10.65 L0.25 11.24 M1.68 8.35 L0.25 7.76 M3.30 6.73 L2.71 5.30 M5.60 6.73 L6.19 5.30 M7.22 8.35 L8.65 7.76 " stroke="#7b7b7b" stroke-width="1.5" fill="none"/><circle cx="9.0" cy="3.9" r="1.5" fill="none" stroke="#7b7b7b" stroke-width="1.3"/><path d="M10.90 3.90 L11.95 3.90 M9.95 5.55 L10.47 6.45 M8.05 5.55 L7.53 6.45 M7.10 3.90 L6.05 3.90 M8.05 2.25 L7.52 1.35 M9.95 2.25 L10.47 1.35 " stroke="#7b7b7b" stroke-width="1.1" fill="none"/></g></svg>
<div class="t" style="left:342.40px;top:384.00px;font-size:9.8px;line-height:9.8px;color:#333;font-weight:400;letter-spacing:-0.15px;">Email Service w/o options</div>
<div class="t" style="left:502.30px;top:384.00px;font-size:9.8px;line-height:9.8px;color:#333;font-weight:400;letter-spacing:-0.15px;">Service description - test visibility.</div>
<div class="t" style="left:742.70px;top:384.00px;font-size:9.8px;line-height:9.8px;color:#333;font-weight:400;letter-spacing:-0.15px;">Draft</div>
<div class="t" style="left:525.80px;width:600px;text-align:center;top:384.00px;font-size:9.8px;line-height:9.8px;color:#333;font-weight:400;letter-spacing:0px;">2</div>
<div class="t" style="left:854.90px;top:384.00px;font-size:9.8px;line-height:9.8px;color:#333;font-weight:400;letter-spacing:0.1px;">04/04/2012</div>
<div class="t" style="left:918.50px;top:384.00px;font-size:9.8px;line-height:9.8px;color:#333;font-weight:400;letter-spacing:0.1px;">01/01/2100</div>
<div class="t" style="left:982.40px;top:384.00px;font-size:9.8px;line-height:9.8px;color:#333;font-weight:400;letter-spacing:-0.15px;">Information Sharing</div>
<div class="t" style="left:1102.00px;top:384.00px;font-size:9.8px;line-height:9.8px;color:#333;font-weight:400;letter-spacing:-0.3px;">SE-0000083</div>
<div class="t" style="left:1222.00px;top:384.00px;font-size:9.8px;line-height:9.8px;color:#333;font-weight:400;letter-spacing:-0.15px;width:34px;overflow:hidden;">SLA - Bu</div>
<div style="position:absolute;left:318px;top:421.00px;width:938px;height:0;border-top:1px dotted #e2e2e2"></div>
<svg style="position:absolute;left:322.97px;top:403.47px;" width="13" height="14" viewBox="0 0 13 14"><g transform="scale(0.95)"><circle cx="4.45" cy="9.5" r="2.45" fill="none" stroke="#7b7b7b" stroke-width="1.9"/><path d="M7.22 10.65 L8.65 11.24 M5.60 12.27 L6.19 13.70 M3.30 12.27 L2.71 13.70 M1.68 10.65 L0.25 11.24 M1.68 8.35 L0.25 7.76 M3.30 6.73 L2.71 5.30 M5.60 6.73 L6.19 5.30 M7.22 8.35 L8.65 7.76 " stroke="#7b7b7b" stroke-width="1.5" fill="none"/><circle cx="9.0" cy="3.9" r="1.5" fill="none" stroke="#7b7b7b" stroke-width="1.3"/><path d="M10.90 3.90 L11.95 3.90 M9.95 5.55 L10.47 6.45 M8.05 5.55 L7.53 6.45 M7.10 3.90 L6.05 3.90 M8.05 2.25 L7.52 1.35 M9.95 2.25 L10.47 1.35 " stroke="#7b7b7b" stroke-width="1.1" fill="none"/></g></svg>
<div class="t" style="left:342.40px;top:407.00px;font-size:9.8px;line-height:9.8px;color:#333;font-weight:400;letter-spacing:-0.15px;">Email Service w/o options and de...</div>
<div class="t" style="left:502.30px;top:407.00px;font-size:9.8px;line-height:9.8px;color:#333;font-weight:400;letter-spacing:-0.15px;">Service description - test</div>
<div class="t" style="left:742.70px;top:407.00px;font-size:9.8px;line-height:9.8px;color:#333;font-weight:400;letter-spacing:-0.15px;">Draft</div>
<div class="t" style="left:525.80px;width:600px;text-align:center;top:407.00px;font-size:9.8px;line-height:9.8px;color:#333;font-weight:400;letter-spacing:0px;">3</div>
<div class="t" style="left:854.90px;top:407.00px;font-size:9.8px;line-height:9.8px;color:#333;font-weight:400;letter-spacing:0.1px;">04/04/2012</div>
<div class="t" style="left:918.50px;top:407.00px;font-size:9.8px;line-height:9.8px;color:#333;font-weight:400;letter-spacing:0.1px;">01/01/2100</div>
<div class="t" style="left:982.40px;top:407.00px;font-size:9.8px;line-height:9.8px;color:#333;font-weight:400;letter-spacing:-0.15px;">Information Sharing</div>
<div class="t" style="left:1102.00px;top:407.00px;font-size:9.8px;line-height:9.8px;color:#333;font-weight:400;letter-spacing:-0.3px;">SE-0000086</div>
<div class="t" style="left:1222.00px;top:407.00px;font-size:9.8px;line-height:9.8px;color:#333;font-weight:400;letter-spacing:-0.15px;width:34px;overflow:hidden;">SLA - Bu</div>
<div style="position:absolute;left:318px;top:443.80px;width:938px;height:0;border-top:1px dotted #e2e2e2"></div>
<svg style="position:absolute;left:322.97px;top:426.27px;" width="13" height="14" viewBox="0 0 13 14"><g transform="scale(0.95)"><circle cx="4.45" cy="9.5" r="2.45" fill="none" stroke="#7b7b7b" stroke-width="1.9"/><path d="M7.22 10.65 L8.65 11.24 M5.60 12.27 L6.19 13.70 M3.30 12.27 L2.71 13.70 M1.68 10.65 L0.25 11.24 M1.68 8.35 L0.25 7.76 M3.30 6.73 L2.71 5.30 M5.60 6.73 L6.19 5.30 M7.22 8.35 L8.65 7.76 " stroke="#7b7b7b" stroke-width="1.5" fill="none"/><circle cx="9.0" cy="3.9" r="1.5" fill="none" stroke="#7b7b7b" stroke-width="1.3"/><path d="M10.90 3.90 L11.95 3.90 M9.95 5.55 L10.47 6.45 M8.05 5.55 L7.53 6.45 M7.10 3.90 L6.05 3.90 M8.05 2.25 L7.52 1.35 M9.95 2.25 L10.47 1.35 " stroke="#7b7b7b" stroke-width="1.1" fill="none"/></g></svg>
<div class="t" style="left:342.40px;top:430.00px;font-size:9.8px;line-height:9.8px;color:#333;font-weight:400;letter-spacing:-0.15px;">Mobile Workplace</div>
<div class="t" style="left:742.70px;top:430.00px;font-size:9.8px;line-height:9.8px;color:#333;font-weight:400;letter-spacing:-0.15px;">Draft</div>
<div class="t" style="left:525.80px;width:600px;text-align:center;top:430.00px;font-size:9.8px;line-height:9.8px;color:#333;font-weight:400;letter-spacing:0px;">1</div>
<div class="t" style="left:854.90px;top:430.00px;font-size:9.8px;line-height:9.8px;color:#333;font-weight:400;letter-spacing:0.1px;">04/04/2012</div>
<div class="t" style="left:918.50px;top:430.00px;font-size:9.8px;line-height:9.8px;color:#333;font-weight:400;letter-spacing:0.1px;">01/01/2100</div>
<div class="t" style="left:982.40px;top:430.00px;font-size:9.8px;line-height:9.8px;color:#333;font-weight:400;letter-spacing:-0.15px;">Workplace</div>
<div class="t" style="left:1102.00px;top:430.00px;font-size:9.8px;line-height:9.8px;color:#333;font-weight:400;letter-spacing:-0.3px;">SE-0000043</div>
<div class="t" style="left:1222.00px;top:430.00px;font-size:9.8px;line-height:9.8px;color:#333;font-weight:400;letter-spacing:-0.15px;width:34px;overflow:hidden;">SLA - Bu</div>
<div style="position:absolute;left:318px;top:466.60px;width:938px;height:0;border-top:1px dotted #e2e2e2"></div>
<svg style="position:absolute;left:322.97px;top:449.07px;" width="13" height="14" viewBox="0 0 13 14"><g transform="scale(0.95)"><circle cx="4.45" cy="9.5" r="2.45" fill="none" stroke="#7b7b7b" stroke-width="1.9"/><path d="M7.22 10.65 L8.65 11.24 M5.60 12.27 L6.19 13.70 M3.30 12.27 L2.71 13.70 M1.68 10.65 L0.25 11.24 M1.68 8.35 L0.25 7.76 M3.30 6.73 L2.71 5.30 M5.60 6.73 L6.19 5.30 M7.22 8.35 L8.65 7.76 " stroke="#7b7b7b" stroke-width="1.5" fill="none"/><circle cx="9.0" cy="3.9" r="1.5" fill="none" stroke="#7b7b7b" stroke-width="1.3"/><path d="M10.90 3.90 L11.95 3.90 M9.95 5.55 L10.47 6.45 M8.05 5.55 L7.53 6.45 M7.10 3.90 L6.05 3.90 M8.05 2.25 L7.52 1.35 M9.95 2.25 L10.47 1.35 " stroke="#7b7b7b" stroke-width="1.1" fill="none"/></g></svg>
<div class="t" style="left:342.40px;top:453.00px;font-size:9.8px;line-height:9.8px;color:#333;font-weight:400;letter-spacing:-0.15px;">Service A</div>
<div class="t" style="left:742.70px;top:453.00px;font-size:9.8px;line-height:9.8px;color:#333;font-weight:400;letter-spacing:-0.15px;">Draft</div>
<div class="t" style="left:525.80px;width:600px;text-align:center;top:453.00px;font-size:9.8px;line-height:9.8px;color:#333;font-weight:400;letter-spacing:0px;">1</div>
<div class="t" style="left:854.90px;top:453.00px;font-size:9.8px;line-height:9.8px;color:#333;font-weight:400;letter-spacing:0.1px;">04/18/2012</div>
<div class="t" style="left:918.50px;top:453.00px;font-size:9.8px;line-height:9.8px;color:#333;font-weight:400;letter-spacing:0.1px;">01/01/2100</div>
<div class="t" style="left:982.40px;top:453.00px;font-size:9.8px;line-height:9.8px;color:#333;font-weight:400;letter-spacing:-0.15px;">Business Process Supp...</div>
<div class="t" style="left:1102.00px;top:453.00px;font-size:9.8px;line-height:9.8px;color:#333;font-weight:400;letter-spacing:-0.3px;">SE-0000069</div>
<div class="t" style="left:1222.00px;top:453.00px;font-size:9.8px;line-height:9.8px;color:#333;font-weight:400;letter-spacing:-0.15px;width:34px;overflow:hidden;">SLA - Bu</div>
<div style="position:absolute;left:318px;top:489.40px;width:938px;height:0;border-top:1px dotted #e2e2e2"></div>
<svg style="position:absolute;left:322.97px;top:471.87px;" width="13" height="14" viewBox="0 0 13 14"><g transform="scale(0.95)"><circle cx="4.45" cy="9.5" r="2.45" fill="none" stroke="#7b7b7b" stroke-width="1.9"/><path d="M7.22 10.65 L8.65 11.24 M5.60 12.27 L6.19 13.70 M3.30 12.27 L2.71 13.70 M1.68 10.65 L0.25 11.24 M1.68 8.35 L0.25 7.76 M3.30 6.73 L2.71 5.30 M5.60 6.73 L6.19 5.30 M7.22 8.35 L8.65 7.76 " stroke="#7b7b7b" stroke-width="1.5" fill="none"/><circle cx="9.0" cy="3.9" r="1.5" fill="none" stroke="#7b7b7b" stroke-width="1.3"/><path d="M10.90 3.90 L11.95 3.90 M9.95 5.55 L10.47 6.45 M8.05 5.55 L7.53 6.45 M7.10 3.90 L6.05 3.90 M8.05 2.25 L7.52 1.35 M9.95 2.25 L10.47 1.35 " stroke="#7b7b7b" stroke-width="1.1" fill="none"/></g></svg>
<div class="t" style="left:342.40px;top:476.00px;font-size:9.8px;line-height:9.8px;color:#333;font-weight:400;letter-spacing:-0.15px;">Standard Workplace</div>
<div class="t" style="left:502.30px;top:476.00px;font-size:9.8px;line-height:9.8px;color:#333;font-weight:400;letter-spacing:-0.15px;">Standard workplace service including HW, SW, email ...</div>
<div class="t" style="left:742.70px;top:476.00px;font-size:9.8px;line-height:9.8px;color:#333;font-weight:400;letter-spacing:-0.15px;">Draft</div>
<div class="t" style="left:525.80px;width:600px;text-align:center;top:476.00px;font-size:9.8px;line-height:9.8px;color:#333;font-weight:400;letter-spacing:0px;">1</div>
<div class="t" style="left:854.90px;top:476.00px;font-size:9.8px;line-height:9.8px;color:#333;font-weight:400;letter-spacing:0.1px;">04/18/2012</div>
<div class="t" style="left:918.50px;top:476.00px;font-size:9.8px;line-height:9.8px;color:#333;font-weight:400;letter-spacing:0.1px;">01/01/2100</div>
<div class="t" style="left:982.40px;top:476.00px;font-size:9.8px;line-height:9.8px;color:#333;font-weight:400;letter-spacing:-0.15px;">Workplace</div>
<div class="t" style="left:1102.00px;top:476.00px;font-size:9.8px;line-height:9.8px;color:#333;font-weight:400;letter-spacing:-0.3px;">SE-0000062</div>
<div class="t" style="left:1222.00px;top:476.00px;font-size:9.8px;line-height:9.8px;color:#333;font-weight:400;letter-spacing:-0.15px;width:34px;overflow:hidden;">SLA - Bu</div>
<div style="position:absolute;left:318px;top:512.20px;width:938px;height:0;border-top:1px dotted #e2e2e2"></div>
<svg style="position:absolute;left:322.97px;top:494.67px;" width="13" height="14" viewBox="0 0 13 14"><g transform="scale(0.95)"><circle cx="4.45" cy="9.5" r="2.45" fill="none" stroke="#7b7b7b" stroke-width="1.9"/><path d="M7.22 10.65 L8.65 11.24 M5.60 12.27 L6.19 13.70 M3.30 12.27 L2.71 13.70 M1.68 10.65 L0.25 11.24 M1.68 8.35 L0.25 7.76 M3.30 6.73 L2.71 5.30 M5.60 6.73 L6.19 5.30 M7.22 8.35 L8.65 7.76 " stroke="#7b7b7b" stroke-width="1.5" fill="none"/><circle cx="9.0" cy="3.9" r="1.5" fill="none" stroke="#7b7b7b" stroke-width="1.3"/><path d="M10.90 3.90 L11.95 3.90 M9.95 5.55 L10.47 6.45 M8.05 5.55 L7.53 6.45 M7.10 3.90 L6.05 3.90 M8.05 2.25 L7.52 1.35 M9.95 2.25 L10.47 1.35 " stroke="#7b7b7b" stroke-width="1.1" fill="none"/></g></svg>
<div class="t" style="left:342.40px;top:498.00px;font-size:9.8px;line-height:9.8px;color:#333;font-weight:400;letter-spacing:-0.15px;">Terminal Services</div>
<div class="t" style="left:742.70px;top:498.00px;font-size:9.8px;line-height:9.8px;color:#333;font-weight:400;letter-spacing:-0.15px;">Draft</div>
<div class="t" style="left:525.80px;width:600px;text-align:center;top:498.00px;font-size:9.8px;line-height:9.8px;color:#333;font-weight:400;letter-spacing:0px;">1</div>
<div class="t" style="left:854.90px;top:498.00px;font-size:9.8px;line-height:9.8px;color:#333;font-weight:400;letter-spacing:0.1px;">04/18/2012</div>
<div class="t" style="left:918.50px;top:498.00px;font-size:9.8px;line-height:9.8px;color:#333;font-weight:400;letter-spacing:0.1px;">01/01/2100</div>
<div class="t" style="left:982.40px;top:498.00px;font-size:9.8px;line-height:9.8px;color:#333;font-weight:400;letter-spacing:-0.15px;">Business Process Supp...</div>
<div class="t" style="left:1102.00px;top:498.00px;font-size:9.8px;line-height:9.8px;color:#333;font-weight:400;letter-spacing:-0.3px;">SE-0000066</div>
<div class="t" style="left:1222.00px;top:498.00px;font-size:9.8px;line-height:9.8px;color:#333;font-weight:400;letter-spacing:-0.15px;width:34px;overflow:hidden;">SLA - Bu</div>
<div style="position:absolute;left:318px;top:535.00px;width:938px;height:0;border-top:1px dotted #e2e2e2"></div>
<svg style="position:absolute;left:322.97px;top:517.47px;" width="13" height="14" viewBox="0 0 13 14"><g transform="scale(0.95)"><circle cx="4.45" cy="9.5" r="2.45" fill="none" stroke="#7b7b7b" stroke-width="1.9"/><path d="M7.22 10.65 L8.65 11.24 M5.60 12.27 L6.19 13.70 M3.30 12.27 L2.71 13.70 M1.68 10.65 L0.25 11.24 M1.68 8.35 L0.25 7.76 M3.30 6.73 L2.71 5.30 M5.60 6.73 L6.19 5.30 M7.22 8.35 L8.65 7.76 " stroke="#7b7b7b" stroke-width="1.5" fill="none"/><circle cx="9.0" cy="3.9" r="1.5" fill="none" stroke="#7b7b7b" stroke-width="1.3"/><path d="M10.90 3.90 L11.95 3.90 M9.95 5.55 L10.47 6.45 M8.05 5.55 L7.53 6.45 M7.10 3.90 L6.05 3.90 M8.05 2.25 L7.52 1.35 M9.95 2.25 L10.47 1.35 " stroke="#7b7b7b" stroke-width="1.1" fill="none"/></g></svg>
<div class="t" style="left:342.40px;top:521.00px;font-size:9.8px;line-height:9.8px;color:#333;font-weight:400;letter-spacing:-0.15px;">Terminal Services no addons</div>
<div class="t" style="left:742.70px;top:521.00px;font-size:9.8px;line-height:9.8px;color:#333;font-weight:400;letter-spacing:-0.15px;">Draft</div>
<div class="t" style="left:525.80px;width:600px;text-align:center;top:521.00px;font-size:9.8px;line-height:9.8px;color:#333;font-weight:400;letter-spacing:0px;">1</div>
<div class="t" style="left:854.90px;top:521.00px;font-size:9.8px;line-height:9.8px;color:#333;font-weight:400;letter-spacing:0.1px;">04/18/2012</div>
<div class="t" style="left:918.50px;top:521.00px;font-size:9.8px;line-height:9.8px;color:#333;font-weight:400;letter-spacing:0.1px;">01/01/2100</div>
<div class="t" style="left:982.40px;top:521.00px;font-size:9.8px;line-height:9.8px;color:#333;font-weight:400;letter-spacing:-0.15px;">Business Process Supp...</div>
<div class="t" style="left:1102.00px;top:521.00px;font-size:9.8px;line-height:9.8px;color:#333;font-weight:400;letter-spacing:-0.3px;">SE-0000064</div>
<div class="t" style="left:1222.00px;top:521.00px;font-size:9.8px;line-height:9.8px;color:#333;font-weight:400;letter-spacing:-0.15px;width:34px;overflow:hidden;">SLA - Bu</div>
<div style="position:absolute;left:318px;top:557.80px;width:938px;height:0;border-top:1px dotted #e2e2e2"></div>
<svg style="position:absolute;left:322.97px;top:540.27px;" width="13" height="14" viewBox="0 0 13 14"><g transform="scale(0.95)"><circle cx="4.45" cy="9.5" r="2.45" fill="none" stroke="#7b7b7b" stroke-width="1.9"/><path d="M7.22 10.65 L8.65 11.24 M5.60 12.27 L6.19 13.70 M3.30 12.27 L2.71 13.70 M1.68 10.65 L0.25 11.24 M1.68 8.35 L0.25 7.76 M3.30 6.73 L2.71 5.30 M5.60 6.73 L6.19 5.30 M7.22 8.35 L8.65 7.76 " stroke="#7b7b7b" stroke-width="1.5" fill="none"/><circle cx="9.0" cy="3.9" r="1.5" fill="none" stroke="#7b7b7b" stroke-width="1.3"/><path d="M10.90 3.90 L11.95 3.90 M9.95 5.55 L10.47 6.45 M8.05 5.55 L7.53 6.45 M7.10 3.90 L6.05 3.90 M8.05 2.25 L7.52 1.35 M9.95 2.25 L10.47 1.35 " stroke="#7b7b7b" stroke-width="1.1" fill="none"/></g></svg>
<div class="t" style="left:342.40px;top:544.00px;font-size:9.8px;line-height:9.8px;color:#333;font-weight:400;letter-spacing:-0.15px;">Test 11</div>
<div class="t" style="left:502.30px;top:544.00px;font-size:9.8px;line-height:9.8px;color:#333;font-weight:400;letter-spacing:-0.15px;">Test descr.</div>
<div class="t" style="left:742.70px;top:544.00px;font-size:9.8px;line-height:9.8px;color:#333;font-weight:400;letter-spacing:-0.15px;">Draft</div>
<div class="t" style="left:525.80px;width:600px;text-align:center;top:544.00px;font-size:9.8px;line-height:9.8px;color:#333;font-weight:400;letter-spacing:0px;">1</div>
<div class="t" style="left:854.90px;top:544.00px;font-size:9.8px;line-height:9.8px;color:#333;font-weight:400;letter-spacing:0.1px;">10/22/2016</div>
<div class="t" style="left:918.50px;top:544.00px;font-size:9.8px;line-height:9.8px;color:#333;font-weight:400;letter-spacing:0.1px;">01/01/2100</div>
<div class="t" style="left:982.40px;top:544.00px;font-size:9.8px;line-height:9.8px;color:#333;font-weight:400;letter-spacing:-0.15px;">Test ST11</div>
<div class="t" style="left:1102.00px;top:544.00px;font-size:9.8px;line-height:9.8px;color:#333;font-weight:400;letter-spacing:-0.3px;">SE-0000082</div>
<div class="t" style="left:1222.00px;top:544.00px;font-size:9.8px;line-height:9.8px;color:#333;font-weight:400;letter-spacing:-0.15px;width:34px;overflow:hidden;">SLA - Bu</div>
<div style="position:absolute;left:318px;top:580.60px;width:938px;height:0;border-top:1px dotted #e2e2e2"></div>
<svg style="position:absolute;left:322.97px;top:563.0699999999999px;" width="13" height="14" viewBox="0 0 13 14"><g transform="scale(0.95)"><circle cx="4.45" cy="9.5" r="2.45" fill="none" stroke="#7b7b7b" stroke-width="1.9"/><path d="M7.22 10.65 L8.65 11.24 M5.60 12.27 L6.19 13.70 M3.30 12.27 L2.71 13.70 M1.68 10.65 L0.25 11.24 M1.68 8.35 L0.25 7.76 M3.30 6.73 L2.71 5.30 M5.60 6.73 L6.19 5.30 M7.22 8.35 L8.65 7.76 " stroke="#7b7b7b" stroke-width="1.5" fill="none"/><circle cx="9.0" cy="3.9" r="1.5" fill="none" stroke="#7b7b7b" stroke-width="1.3"/><path d="M10.90 3.90 L11.95 3.90 M9.95 5.55 L10.47 6.45 M8.05 5.55 L7.53 6.45 M7.10 3.90 L6.05 3.90 M8.05 2.25 L7.52 1.35 M9.95 2.25 L10.47 1.35 " stroke="#7b7b7b" stroke-width="1.1" fill="none"/></g></svg>
<div class="t" style="left:342.40px;top:567.00px;font-size:9.8px;line-height:9.8px;color:#333;font-weight:400;letter-spacing:-0.15px;">Test 12</div>
<div class="t" style="left:502.30px;top:567.00px;font-size:9.8px;line-height:9.8px;color:#333;font-weight:400;letter-spacing:-0.15px;">Test descr.</div>
<div class="t" style="left:742.70px;top:567.00px;font-size:9.8px;line-height:9.8px;color:#333;font-weight:400;letter-spacing:-0.15px;">Draft</div>
<div class="t" style="left:525.80px;width:600px;text-align:center;top:567.00px;font-size:9.8px;line-height:9.8px;color:#333;font-weight:400;letter-spacing:0px;">2</div>
<div class="t" style="left:854.90px;top:567.00px;font-size:9.8px;line-height:9.8px;color:#333;font-weight:400;letter-spacing:0.1px;">10/22/2016</div>
<div class="t" style="left:918.50px;top:567.00px;font-size:9.8px;line-height:9.8px;color:#333;font-weight:400;letter-spacing:0.1px;">01/01/2100</div>
<div class="t" style="left:982.40px;top:567.00px;font-size:9.8px;line-height:9.8px;color:#333;font-weight:400;letter-spacing:-0.15px;">Test ST11</div>
<div class="t" style="left:1102.00px;top:567.00px;font-size:9.8px;line-height:9.8px;color:#333;font-weight:400;letter-spacing:-0.3px;">SE-0000085</div>
<div class="t" style="left:1222.00px;top:567.00px;font-size:9.8px;line-height:9.8px;color:#333;font-weight:400;letter-spacing:-0.15px;width:34px;overflow:hidden;">SLA - Bu</div>
<div style="position:absolute;left:318px;top:603.40px;width:938px;height:0;border-top:1px dotted #e2e2e2"></div>
<svg style="position:absolute;left:322.97px;top:585.87px;" width="13" height="14" viewBox="0 0 13 14"><g transform="scale(0.95)"><circle cx="4.45" cy="9.5" r="2.45" fill="none" stroke="#7b7b7b" stroke-width="1.9"/><path d="M7.22 10.65 L8.65 11.24 M5.60 12.27 L6.19 13.70 M3.30 12.27 L2.71 13.70 M1.68 10.65 L0.25 11.24 M1.68 8.35 L0.25 7.76 M3.30 6.73 L2.71 5.30 M5.60 6.73 L6.19 5.30 M7.22 8.35 L8.65 7.76 " stroke="#7b7b7b" stroke-width="1.5" fill="none"/><circle cx="9.0" cy="3.9" r="1.5" fill="none" stroke="#7b7b7b" stroke-width="1.3"/><path d="M10.90 3.90 L11.95 3.90 M9.95 5.55 L10.47 6.45 M8.05 5.55 L7.53 6.45 M7.10 3.90 L6.05 3.90 M8.05 2.25 L7.52 1.35 M9.95 2.25 L10.47 1.35 " stroke="#7b7b7b" stroke-width="1.1" fill="none"/></g></svg>
<div class="t" style="left:342.40px;top:590.00px;font-size:9.8px;line-height:9.8px;color:#333;font-weight:400;letter-spacing:-0.15px;">Test 131</div>
<div class="t" style="left:742.70px;top:590.00px;font-size:9.8px;line-height:9.8px;color:#333;font-weight:400;letter-spacing:-0.15px;">Draft</div>
<div class="t" style="left:525.80px;width:600px;text-align:center;top:590.00px;font-size:9.8px;line-height:9.8px;color:#333;font-weight:400;letter-spacing:0px;">1</div>
<div class="t" style="left:854.90px;top:590.00px;font-size:9.8px;line-height:9.8px;color:#333;font-weight:400;letter-spacing:0.1px;">01/04/2017</div>
<div class="t" style="left:918.50px;top:590.00px;font-size:9.8px;line-height:9.8px;color:#333;font-weight:400;letter-spacing:0.1px;">01/01/2100</div>
<div class="t" style="left:982.40px;top:590.00px;font-size:9.8px;line-height:9.8px;color:#333;font-weight:400;letter-spacing:-0.15px;">Business Management ...</div>
<div class="t" style="left:1102.00px;top:590.00px;font-size:9.8px;line-height:9.8px;color:#333;font-weight:400;letter-spacing:-0.3px;">SE-0000088</div>
<div class="t" style="left:1222.00px;top:590.00px;font-size:9.8px;line-height:9.8px;color:#333;font-weight:400;letter-spacing:-0.15px;width:34px;overflow:hidden;">SLA - Bu</div>
<div style="position:absolute;left:318px;top:626.20px;width:938px;height:0;border-top:1px dotted #e2e2e2"></div>
<svg style="position:absolute;left:322.97px;top:608.6700000000001px;" width="13" height="14" viewBox="0 0 13 14"><g transform="scale(0.95)"><circle cx="4.45" cy="9.5" r="2.45" fill="none" stroke="#7b7b7b" stroke-width="1.9"/><path d="M7.22 10.65 L8.65 11.24 M5.60 12.27 L6.19 13.70 M3.30 12.27 L2.71 13.70 M1.68 10.65 L0.25 11.24 M1.68 8.35 L0.25 7.76 M3.30 6.73 L2.71 5.30 M5.60 6.73 L6.19 5.30 M7.22 8.35 L8.65 7.76 " stroke="#7b7b7b" stroke-width="1.5" fill="none"/><circle cx="9.0" cy="3.9" r="1.5" fill="none" stroke="#7b7b7b" stroke-width="1.3"/><path d="M10.90 3.90 L11.95 3.90 M9.95 5.55 L10.47 6.45 M8.05 5.55 L7.53 6.45 M7.10 3.90 L6.05 3.90 M8.05 2.25 L7.52 1.35 M9.95 2.25 L10.47 1.35 " stroke="#7b7b7b" stroke-width="1.1" fill="none"/></g></svg>
<div class="t" style="left:342.40px;top:612.00px;font-size:9.8px;line-height:9.8px;color:#333;font-weight:400;letter-spacing:-0.15px;">Test Service Parameters</div>
<div class="t" style="left:502.30px;top:612.00px;font-size:9.8px;line-height:9.8px;color:#333;font-weight:400;letter-spacing:-0.15px;">Test service with all possible service parameter types</div>
<div class="t" style="left:742.70px;top:612.00px;font-size:9.8px;line-height:9.8px;color:#333;font-weight:400;letter-spacing:-0.15px;">Draft</div>
<div class="t" style="left:525.80px;width:600px;text-align:center;top:612.00px;font-size:9.8px;line-height:9.8px;color:#333;font-weight:400;letter-spacing:0px;">3</div>
<div class="t" style="left:854.90px;top:612.00px;font-size:9.8px;line-height:9.8px;color:#333;font-weight:400;letter-spacing:0.1px;">10/22/2016</div>
<div class="t" style="left:918.50px;top:612.00px;font-size:9.8px;line-height:9.8px;color:#333;font-weight:400;letter-spacing:0.1px;">01/01/2100</div>
<div class="t" style="left:982.40px;top:612.00px;font-size:9.8px;line-height:9.8px;color:#333;font-weight:400;letter-spacing:-0.15px;">Business Management ...</div>
<div class="t" style="left:1102.00px;top:612.00px;font-size:9.8px;line-height:9.8px;color:#333;font-weight:400;letter-spacing:-0.3px;">SE-0000087</div>
<div class="t" style="left:1222.00px;top:612.00px;font-size:9.8px;line-height:9.8px;color:#333;font-weight:400;letter-spacing:-0.15px;width:34px;overflow:hidden;">SLA - Bu</div>
<div style="position:absolute;left:318px;top:649.00px;width:938px;height:0;border-top:1px dotted #e2e2e2"></div>
<svg style="position:absolute;left:322.97px;top:631.47px;" width="13" height="14" viewBox="0 0 13 14"><g transform="scale(0.95)"><circle cx="4.45" cy="9.5" r="2.45" fill="none" stroke="#7b7b7b" stroke-width="1.9"/><path d="M7.22 10.65 L8.65 11.24 M5.60 12.27 L6.19 13.70 M3.30 12.27 L2.71 13.70 M1.68 10.65 L0.25 11.24 M1.68 8.35 L0.25 7.76 M3.30 6.73 L2.71 5.30 M5.60 6.73 L6.19 5.30 M7.22 8.35 L8.65 7.76 " stroke="#7b7b7b" stroke-width="1.5" fill="none"/><circle cx="9.0" cy="3.9" r="1.5" fill="none" stroke="#7b7b7b" stroke-width="1.3"/><path d="M10.90 3.90 L11.95 3.90 M9.95 5.55 L10.47 6.45 M8.05 5.55 L7.53 6.45 M7.10 3.90 L6.05 3.90 M8.05 2.25 L7.52 1.35 M9.95 2.25 L10.47 1.35 " stroke="#7b7b7b" stroke-width="1.1" fill="none"/></g></svg>
<div class="t" style="left:342.40px;top:635.00px;font-size:9.8px;line-height:9.8px;color:#333;font-weight:400;letter-spacing:-0.15px;">Virtual Web Hosting</div>
<div class="t" style="left:502.30px;top:635.00px;font-size:9.8px;line-height:9.8px;color:#333;font-weight:400;letter-spacing:-0.15px;">A service company hosts customer&#x27;s web site on a s...</div>
<div class="t" style="left:742.70px;top:635.00px;font-size:9.8px;line-height:9.8px;color:#333;font-weight:400;letter-spacing:-0.15px;">Draft</div>
<div class="t" style="left:525.80px;width:600px;text-align:center;top:635.00px;font-size:9.8px;line-height:9.8px;color:#333;font-weight:400;letter-spacing:0px;">1</div>
<div class="t" style="left:854.90px;top:635.00px;font-size:9.8px;line-height:9.8px;color:#333;font-weight:400;letter-spacing:0.1px;">04/04/2012</div>
<div class="t" style="left:918.50px;top:635.00px;font-size:9.8px;line-height:9.8px;color:#333;font-weight:400;letter-spacing:0.1px;">01/01/2100</div>
<div class="t" style="left:982.40px;top:635.00px;font-size:9.8px;line-height:9.8px;color:#333;font-weight:400;letter-spacing:-0.15px;">Customer Service</div>
<div class="t" style="left:1102.00px;top:635.00px;font-size:9.8px;line-height:9.8px;color:#333;font-weight:400;letter-spacing:-0.3px;">SE-0000005</div>
<div class="t" style="left:1222.00px;top:635.00px;font-size:9.8px;line-height:9.8px;color:#333;font-weight:400;letter-spacing:-0.15px;width:34px;overflow:hidden;">SLA - Bu</div>
<svg style="position:absolute;left:322px;top:805px;" width="6" height="6" viewBox="0 0 6 6"><path d="M4.8 0.5 L1 3 L4.8 5.5" fill="none" stroke="#666" stroke-width="1"/></svg>
<div style="position:absolute;left:332px;top:806px;width:826px;height:5px;background:#c9d0d5;border-radius:3px;"></div>
<svg style="position:absolute;left:1246.5px;top:805px;" width="6" height="6" viewBox="0 0 6 6"><path d="M1 0.5 L4.8 3 L1 5.5" fill="none" stroke="#666" stroke-width="1"/></svg>
<div style="position:absolute;left:318px;top:814px;width:938px;height:18px;background:#f1f2f4;"></div>
<div style="position:absolute;left:337.3px;top:814px;width:1.0px;height:18px;background:#fff;"></div>
<div style="position:absolute;left:497.5px;top:814px;width:1.0px;height:18px;background:#fff;"></div>
<div style="position:absolute;left:737.3px;top:814px;width:1.0px;height:18px;background:#fff;"></div>
<div style="position:absolute;left:801.4px;top:814px;width:1.0px;height:18px;background:#fff;"></div>
<div style="position:absolute;left:849.2px;top:814px;width:1.0px;height:18px;background:#fff;"></div>
<div style="position:absolute;left:913.4px;top:814px;width:1.0px;height:18px;background:#fff;"></div>
<div style="position:absolute;left:977.5px;top:814px;width:1.0px;height:18px;background:#fff;"></div>
<div style="position:absolute;left:1097px;top:814px;width:1px;height:18px;background:#fff;"></div>
<div style="position:absolute;left:1217.5px;top:814px;width:1.0px;height:18px;background:#fff;"></div>
<svg style="position:absolute;left:822.5px;top:818px;" width="6" height="10" viewBox="0 0 6 10"><path d="M0 0 L5.5 4.6 L0 9.3 Z" fill="#111"/></svg>
<div class="t" style="left:319.00px;top:848.00px;font-size:10.2px;line-height:10.2px;color:#606060;font-weight:700;letter-spacing:0px;">1 - 20 of 20</div>
<div style="position:absolute;left:388px;top:840px;width:82px;height:22px;background:#d9e4f0;border-radius:3px;"></div>
<div class="t" style="left:393.60px;top:848.00px;font-size:9.05px;line-height:9.05px;color:#1c3f94;font-weight:700;letter-spacing:0px;">Modify condition</div>
<div style="position:absolute;left:474px;top:840px;width:22px;height:22px;background:#d9e4f0;border-radius:3px;"></div>
<div style="position:absolute;left:479px;top:845px;width:10px;height:10px;border:1px solid #222;background:#fff"></div>
<svg style="position:absolute;left:480px;top:846px;" width="10" height="10" viewBox="0 0 10 10"><path d="M1.5 4.5 L4 7.5 L8.5 1.2" fill="none" stroke="#000" stroke-width="1.8"/></svg>
<div style="position:absolute;left:692px;top:840px;width:22px;height:22px;background:#d9e4f0;border-radius:3px;"></div>
<div class="t" style="left:401.80px;width:600px;text-align:center;top:847.00px;font-size:12.0px;line-height:12.0px;color:#444;font-weight:400;letter-spacing:0px;font-family:'Liberation Mono',monospace;">i</div>
<div style="position:absolute;left:718px;top:840px;width:128px;height:22px;background:#d9e4f0;border-radius:3px;"></div>
<svg style="position:absolute;left:723px;top:845px;" width="11" height="14" viewBox="0 0 11 14"><path d="M0.7 0.7 H6.5 L10 4.2 V13 H0.7 Z M6.5 0.7 V4.2 H10" fill="none" stroke="#222" stroke-width="1.2"/></svg>
<div class="t" style="left:739.40px;top:848.00px;font-size:9.1px;line-height:9.1px;color:#1c3f94;font-weight:700;letter-spacing:0px;">Create service template</div>
<div style="position:absolute;left:1234px;top:840px;width:22px;height:22px;background:#d9e4f0;border-radius:3px;"></div>
<svg style="position:absolute;left:1238px;top:845px;" width="16" height="13" viewBox="0 0 16 13"><path d="M7.9 3.8 V1.3 H1.6 V11.7 H7.9 V8.9" fill="none" stroke="#111" stroke-width="1.3"/><path d="M3.8 6.5 H11.8" stroke="#555" stroke-width="1.1"/><path d="M11.2 3.9 L14 6.5 L11.2 9.1 Z" fill="#111"/></svg>
<!--BODY-->
</body></html>
